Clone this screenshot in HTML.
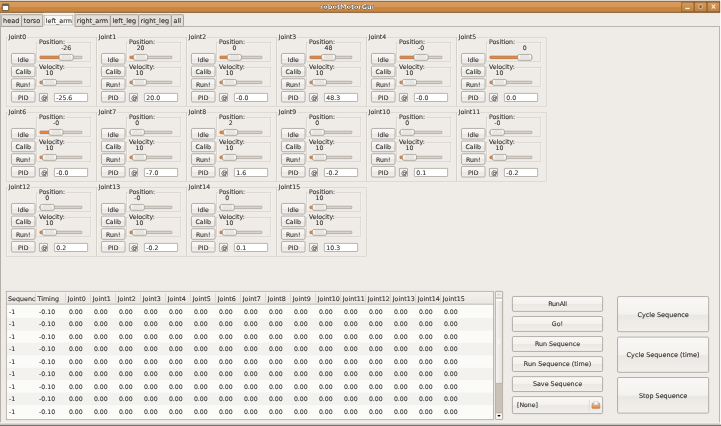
<!DOCTYPE html>
<html lang="en"><head><meta charset="utf-8"><title>robotMotorGui</title>
<style>html,body{margin:0;padding:0;background:#efebe7;overflow:hidden}body{width:721px;height:426px}svg{display:block;position:absolute;left:0;top:0;will-change:transform}text{font-family:'DejaVu Sans','Liberation Sans',sans-serif;white-space:pre;stroke:#2b2b2b;stroke-width:0.08px}</style></head><body>
<svg width="721" height="426" viewBox="0 0 721 426">
<defs>
<linearGradient id="btn" x1="0" y1="0" x2="0" y2="1"><stop offset="0" stop-color="#f9f8f6"/><stop offset="0.49" stop-color="#f4f2ef"/><stop offset="0.53" stop-color="#ebe8e4"/><stop offset="1" stop-color="#f1efec"/></linearGradient>
<linearGradient id="hnd" x1="0" y1="0" x2="0" y2="1"><stop offset="0" stop-color="#ffffff"/><stop offset="1" stop-color="#ebe8e3"/></linearGradient>
<linearGradient id="ttl" x1="0" y1="0" x2="0" y2="1"><stop offset="0" stop-color="#d89d60"/><stop offset="0.50" stop-color="#d59757"/><stop offset="0.58" stop-color="#c9853f"/><stop offset="1" stop-color="#ca8742"/></linearGradient>
<linearGradient id="wb" x1="0" y1="0" x2="0" y2="1"><stop offset="0" stop-color="#d19b5f"/><stop offset="1" stop-color="#c08141"/></linearGradient>
<linearGradient id="hdr" x1="0" y1="0" x2="0" y2="1"><stop offset="0" stop-color="#f4f2ef"/><stop offset="1" stop-color="#e9e6e1"/></linearGradient>
<linearGradient id="thumb" x1="0" y1="0" x2="1" y2="0"><stop offset="0" stop-color="#f6f4f2"/><stop offset="1" stop-color="#e4e0da"/></linearGradient>
<linearGradient id="bot" x1="0" y1="0" x2="0" y2="1"><stop offset="0" stop-color="#d9d6d2"/><stop offset="0.45" stop-color="#8f8c88"/><stop offset="1" stop-color="#5a5856"/></linearGradient>
<linearGradient id="fold" x1="0" y1="0" x2="0" y2="1"><stop offset="0" stop-color="#f3b57c"/><stop offset="1" stop-color="#e27a32"/></linearGradient>
</defs>
<rect x="0.00" y="0.00" width="721.00" height="426.00" fill="#efebe7"/>
<rect x="720.10" y="0.00" width="0.90" height="426.00" fill="#fbfaf9"/>
<rect x="0.00" y="0.00" width="720.10" height="1.20" fill="#ddd1c7"/>
<rect x="0.00" y="1.00" width="720.10" height="11.40" fill="url(#ttl)"/>
<rect x="0.00" y="1.10" width="720.10" height="0.80" fill="#86633a"/>
<rect x="0.00" y="11.70" width="720.10" height="1.25" fill="#8a663c"/>
<rect x="0.00" y="12.95" width="720.10" height="0.85" fill="#f8e4cc"/>
<rect x="2.30" y="4.20" width="6.40" height="6.40" fill="#fafafa" stroke="#5b3b1c" stroke-width="0.8" rx="0.4"/>
<rect x="2.50" y="4.30" width="6.00" height="1.50" fill="#4c4a48"/>
<text x="347.00" y="9.20" font-size="6.5" fill="#ffffff" text-anchor="middle" font-weight="bold" stroke="none" style="filter:drop-shadow(0.55px 0.55px 0 #3d2208) drop-shadow(0.15px 0.15px 0.2px rgba(61,34,8,0.6))">robotMotorGui</text>
<rect x="681.30" y="1.90" width="38.80" height="10.00" fill="#955d24"/>
<rect x="682.20" y="2.80" width="11.10" height="8.10" fill="url(#wb)" stroke="#c9985f" stroke-width="0.4" rx="0.6"/>
<rect x="695.00" y="2.80" width="11.10" height="8.10" fill="url(#wb)" stroke="#c9985f" stroke-width="0.4" rx="0.6"/>
<rect x="707.90" y="2.80" width="11.10" height="8.10" fill="url(#wb)" stroke="#c9985f" stroke-width="0.4" rx="0.6"/>
<rect x="685.40" y="7.80" width="4.30" height="1.30" fill="#fdf1d2"/>
<rect x="698.90" y="4.80" width="3.30" height="3.90" fill="#b47a3e" stroke="#e8d3b3" stroke-width="0.55"/>
<rect x="700.10" y="6.00" width="1.00" height="1.50" fill="#6e441b"/>
<path d="M711.7 4.5 L715.3 8.7 M715.3 4.5 L711.7 8.7" stroke="#f8ead6" stroke-width="1.15" fill="none"/>
<rect x="0.60" y="26.40" width="718.95" height="397.20" fill="#efebe7" stroke="#a59f96" stroke-width="0.7"/>
<rect x="1.20" y="14.70" width="20.40" height="11.70" fill="#e2ded8" stroke="#99938a" stroke-width="0.8" rx="0.8"/>
<text x="11.20" y="22.85" font-size="6.5" fill="#2b2b2b" text-anchor="middle">head</text>
<rect x="21.60" y="14.70" width="21.00" height="11.70" fill="#e2ded8" stroke="#99938a" stroke-width="0.8" rx="0.8"/>
<text x="31.90" y="22.85" font-size="6.5" fill="#2b2b2b" text-anchor="middle">torso</text>
<rect x="75.00" y="14.70" width="35.40" height="11.70" fill="#e2ded8" stroke="#99938a" stroke-width="0.8" rx="0.8"/>
<text x="92.50" y="22.85" font-size="6.5" fill="#2b2b2b" text-anchor="middle">right_arm</text>
<rect x="110.40" y="14.70" width="28.20" height="11.70" fill="#e2ded8" stroke="#99938a" stroke-width="0.8" rx="0.8"/>
<text x="124.30" y="22.85" font-size="6.5" fill="#2b2b2b" text-anchor="middle">left_leg</text>
<rect x="138.60" y="14.70" width="32.80" height="11.70" fill="#e2ded8" stroke="#99938a" stroke-width="0.8" rx="0.8"/>
<text x="154.80" y="22.85" font-size="6.5" fill="#2b2b2b" text-anchor="middle">right_leg</text>
<rect x="171.40" y="14.70" width="12.10" height="11.70" fill="#e2ded8" stroke="#99938a" stroke-width="0.8" rx="0.8"/>
<text x="177.25" y="22.85" font-size="6.5" fill="#2b2b2b" text-anchor="middle">all</text>
<rect x="43.00" y="12.95" width="31.30" height="14.15" fill="#f3f0ed"/>
<path d="M43.0 26.4 L43.0 13.8 Q43.0 13.2 43.6 13.2 L73.7 13.2 Q74.3 13.2 74.3 13.8 L74.3 26.4" fill="none" stroke="#b5afa6" stroke-width="0.6"/>
<rect x="43.30" y="12.95" width="30.70" height="0.85" fill="#fdfcfb"/>
<rect x="44.60" y="15.30" width="28.20" height="9.70" fill="#f9f8f7" stroke="#b3aea7" stroke-width="0.55"/>
<text x="58.80" y="22.85" font-size="6.4" fill="#2b2b2b" text-anchor="middle">left_arm</text>
<g transform="translate(0,0)">
<rect x="7.05" y="37.85" width="89.80" height="69.00" fill="none" stroke="#ffffff" stroke-width="0.5"/>
<rect x="6.60" y="37.40" width="89.80" height="69.00" fill="none" stroke="#cdc8c1" stroke-width="0.6"/>
<rect x="7.60" y="36.20" width="19.40" height="2.60" fill="#efebe7"/>
<text x="8.60" y="39.30" font-size="6.2" fill="#2b2b2b" text-anchor="start">Joint0</text>
<rect x="37.15" y="42.95" width="54.10" height="18.90" fill="none" stroke="#ffffff" stroke-width="0.5"/>
<rect x="36.70" y="42.50" width="54.10" height="18.90" fill="none" stroke="#cdc8c1" stroke-width="0.6"/>
<rect x="37.90" y="41.30" width="28.20" height="2.60" fill="#efebe7"/>
<text x="38.90" y="43.80" font-size="6.2" fill="#2b2b2b" text-anchor="start">Position:</text>
<rect x="37.15" y="67.95" width="54.10" height="18.90" fill="none" stroke="#ffffff" stroke-width="0.5"/>
<rect x="36.70" y="67.50" width="54.10" height="18.90" fill="none" stroke="#cdc8c1" stroke-width="0.6"/>
<rect x="37.90" y="66.30" width="27.30" height="2.60" fill="#efebe7"/>
<text x="38.90" y="68.80" font-size="6.2" fill="#2b2b2b" text-anchor="start">Velocity:</text>
<rect x="11.45" y="53.45" width="23.60" height="10.60" fill="url(#btn)" stroke="#7f7971" stroke-width="0.55" rx="1.4"/>
<text x="23.25" y="61.70" font-size="6.2" fill="#2b2b2b" text-anchor="middle">Idle</text>
<rect x="11.45" y="66.10" width="23.60" height="10.60" fill="url(#btn)" stroke="#7f7971" stroke-width="0.55" rx="1.4"/>
<text x="23.25" y="74.35" font-size="6.2" fill="#2b2b2b" text-anchor="middle">Calib</text>
<rect x="11.45" y="78.75" width="23.60" height="10.60" fill="url(#btn)" stroke="#7f7971" stroke-width="0.55" rx="1.4"/>
<text x="23.25" y="87.00" font-size="6.2" fill="#2b2b2b" text-anchor="middle">Run!</text>
<rect x="11.45" y="91.40" width="23.60" height="10.60" fill="url(#btn)" stroke="#7f7971" stroke-width="0.55" rx="1.4"/>
<text x="23.25" y="99.65" font-size="6.2" fill="#2b2b2b" text-anchor="middle">PID</text>
<text x="66.20" y="49.60" font-size="6.2" fill="#2b2b2b" text-anchor="middle">-26</text>
<rect x="40.00" y="56.23" width="41.90" height="2.35" fill="#d9d3cb" stroke="#958f86" stroke-width="0.55" rx="0.6"/>
<rect x="40.00" y="56.23" width="26.20" height="2.35" fill="#ec8640" stroke="#b7662c" stroke-width="0.55" rx="0.6"/>
<rect x="59.15" y="54.45" width="14.10" height="5.90" fill="url(#hnd)" stroke="#857f77" stroke-width="0.6" rx="1.7"/>
<rect x="61.60" y="55.30" width="9.20" height="4.20" fill="#e0ddd8"/>
<line x1="62.30" y1="58.90" x2="63.30" y2="55.90" stroke="#f8f7f5" stroke-width="0.6"/>
<line x1="64.00" y1="58.90" x2="65.00" y2="55.90" stroke="#f8f7f5" stroke-width="0.6"/>
<line x1="65.70" y1="58.90" x2="66.70" y2="55.90" stroke="#f8f7f5" stroke-width="0.6"/>
<line x1="67.40" y1="58.90" x2="68.40" y2="55.90" stroke="#f8f7f5" stroke-width="0.6"/>
<line x1="69.10" y1="58.90" x2="70.10" y2="55.90" stroke="#f8f7f5" stroke-width="0.6"/>
<text x="49.50" y="74.60" font-size="6.2" fill="#2b2b2b" text-anchor="middle">10</text>
<rect x="40.00" y="81.23" width="41.90" height="2.35" fill="#d9d3cb" stroke="#958f86" stroke-width="0.55" rx="0.6"/>
<rect x="40.00" y="81.23" width="9.45" height="2.35" fill="#ec8640" stroke="#b7662c" stroke-width="0.55" rx="0.6"/>
<rect x="42.40" y="79.45" width="14.10" height="5.90" fill="url(#hnd)" stroke="#857f77" stroke-width="0.6" rx="1.7"/>
<rect x="44.85" y="80.30" width="9.20" height="4.20" fill="#e0ddd8"/>
<line x1="45.55" y1="83.90" x2="46.55" y2="80.90" stroke="#f8f7f5" stroke-width="0.6"/>
<line x1="47.25" y1="83.90" x2="48.25" y2="80.90" stroke="#f8f7f5" stroke-width="0.6"/>
<line x1="48.95" y1="83.90" x2="49.95" y2="80.90" stroke="#f8f7f5" stroke-width="0.6"/>
<line x1="50.65" y1="83.90" x2="51.65" y2="80.90" stroke="#f8f7f5" stroke-width="0.6"/>
<line x1="52.35" y1="83.90" x2="53.35" y2="80.90" stroke="#f8f7f5" stroke-width="0.6"/>
<rect x="39.40" y="93.40" width="8.10" height="8.00" fill="#f6f4f2" stroke="#857f77" stroke-width="0.6" rx="0.5"/>
<svg x="39.7" y="93.7" width="7.6" height="7.4" viewBox="39.7 93.7 7.6 7.4">
<text x="41.20" y="99.50" font-size="6.2" fill="#2b2b2b" text-anchor="start">@</text>
</svg>
<rect x="54.40" y="93.40" width="33.20" height="8.10" fill="#ffffff" stroke="#8f8a82" stroke-width="0.6" rx="0.6"/>
<text x="56.30" y="99.60" font-size="6.2" fill="#2b2b2b" text-anchor="start">-25.6</text>
</g>
<g transform="translate(90,0)">
<rect x="7.05" y="37.85" width="89.80" height="69.00" fill="none" stroke="#ffffff" stroke-width="0.5"/>
<rect x="6.60" y="37.40" width="89.80" height="69.00" fill="none" stroke="#cdc8c1" stroke-width="0.6"/>
<rect x="7.60" y="36.20" width="19.40" height="2.60" fill="#efebe7"/>
<text x="8.60" y="39.30" font-size="6.2" fill="#2b2b2b" text-anchor="start">Joint1</text>
<rect x="37.15" y="42.95" width="54.10" height="18.90" fill="none" stroke="#ffffff" stroke-width="0.5"/>
<rect x="36.70" y="42.50" width="54.10" height="18.90" fill="none" stroke="#cdc8c1" stroke-width="0.6"/>
<rect x="37.90" y="41.30" width="28.20" height="2.60" fill="#efebe7"/>
<text x="38.90" y="43.80" font-size="6.2" fill="#2b2b2b" text-anchor="start">Position:</text>
<rect x="37.15" y="67.95" width="54.10" height="18.90" fill="none" stroke="#ffffff" stroke-width="0.5"/>
<rect x="36.70" y="67.50" width="54.10" height="18.90" fill="none" stroke="#cdc8c1" stroke-width="0.6"/>
<rect x="37.90" y="66.30" width="27.30" height="2.60" fill="#efebe7"/>
<text x="38.90" y="68.80" font-size="6.2" fill="#2b2b2b" text-anchor="start">Velocity:</text>
<rect x="11.45" y="53.45" width="23.60" height="10.60" fill="url(#btn)" stroke="#7f7971" stroke-width="0.55" rx="1.4"/>
<text x="23.25" y="61.70" font-size="6.2" fill="#2b2b2b" text-anchor="middle">Idle</text>
<rect x="11.45" y="66.10" width="23.60" height="10.60" fill="url(#btn)" stroke="#7f7971" stroke-width="0.55" rx="1.4"/>
<text x="23.25" y="74.35" font-size="6.2" fill="#2b2b2b" text-anchor="middle">Calib</text>
<rect x="11.45" y="78.75" width="23.60" height="10.60" fill="url(#btn)" stroke="#7f7971" stroke-width="0.55" rx="1.4"/>
<text x="23.25" y="87.00" font-size="6.2" fill="#2b2b2b" text-anchor="middle">Run!</text>
<rect x="11.45" y="91.40" width="23.60" height="10.60" fill="url(#btn)" stroke="#7f7971" stroke-width="0.55" rx="1.4"/>
<text x="23.25" y="99.65" font-size="6.2" fill="#2b2b2b" text-anchor="middle">PID</text>
<text x="50.60" y="49.60" font-size="6.2" fill="#2b2b2b" text-anchor="middle">20</text>
<rect x="40.00" y="56.23" width="41.90" height="2.35" fill="#d9d3cb" stroke="#958f86" stroke-width="0.55" rx="0.6"/>
<rect x="40.00" y="56.23" width="10.60" height="2.35" fill="#ec8640" stroke="#b7662c" stroke-width="0.55" rx="0.6"/>
<rect x="43.55" y="54.45" width="14.10" height="5.90" fill="url(#hnd)" stroke="#857f77" stroke-width="0.6" rx="1.7"/>
<rect x="46.00" y="55.30" width="9.20" height="4.20" fill="#e0ddd8"/>
<line x1="46.70" y1="58.90" x2="47.70" y2="55.90" stroke="#f8f7f5" stroke-width="0.6"/>
<line x1="48.40" y1="58.90" x2="49.40" y2="55.90" stroke="#f8f7f5" stroke-width="0.6"/>
<line x1="50.10" y1="58.90" x2="51.10" y2="55.90" stroke="#f8f7f5" stroke-width="0.6"/>
<line x1="51.80" y1="58.90" x2="52.80" y2="55.90" stroke="#f8f7f5" stroke-width="0.6"/>
<line x1="53.50" y1="58.90" x2="54.50" y2="55.90" stroke="#f8f7f5" stroke-width="0.6"/>
<text x="49.50" y="74.60" font-size="6.2" fill="#2b2b2b" text-anchor="middle">10</text>
<rect x="40.00" y="81.23" width="41.90" height="2.35" fill="#d9d3cb" stroke="#958f86" stroke-width="0.55" rx="0.6"/>
<rect x="40.00" y="81.23" width="9.45" height="2.35" fill="#ec8640" stroke="#b7662c" stroke-width="0.55" rx="0.6"/>
<rect x="42.40" y="79.45" width="14.10" height="5.90" fill="url(#hnd)" stroke="#857f77" stroke-width="0.6" rx="1.7"/>
<rect x="44.85" y="80.30" width="9.20" height="4.20" fill="#e0ddd8"/>
<line x1="45.55" y1="83.90" x2="46.55" y2="80.90" stroke="#f8f7f5" stroke-width="0.6"/>
<line x1="47.25" y1="83.90" x2="48.25" y2="80.90" stroke="#f8f7f5" stroke-width="0.6"/>
<line x1="48.95" y1="83.90" x2="49.95" y2="80.90" stroke="#f8f7f5" stroke-width="0.6"/>
<line x1="50.65" y1="83.90" x2="51.65" y2="80.90" stroke="#f8f7f5" stroke-width="0.6"/>
<line x1="52.35" y1="83.90" x2="53.35" y2="80.90" stroke="#f8f7f5" stroke-width="0.6"/>
<rect x="39.40" y="93.40" width="8.10" height="8.00" fill="#f6f4f2" stroke="#857f77" stroke-width="0.6" rx="0.5"/>
<svg x="39.7" y="93.7" width="7.6" height="7.4" viewBox="39.7 93.7 7.6 7.4">
<text x="41.20" y="99.50" font-size="6.2" fill="#2b2b2b" text-anchor="start">@</text>
</svg>
<rect x="54.40" y="93.40" width="33.20" height="8.10" fill="#ffffff" stroke="#8f8a82" stroke-width="0.6" rx="0.6"/>
<text x="56.30" y="99.60" font-size="6.2" fill="#2b2b2b" text-anchor="start">20.0</text>
</g>
<g transform="translate(180,0)">
<rect x="7.05" y="37.85" width="89.80" height="69.00" fill="none" stroke="#ffffff" stroke-width="0.5"/>
<rect x="6.60" y="37.40" width="89.80" height="69.00" fill="none" stroke="#cdc8c1" stroke-width="0.6"/>
<rect x="7.60" y="36.20" width="19.40" height="2.60" fill="#efebe7"/>
<text x="8.60" y="39.30" font-size="6.2" fill="#2b2b2b" text-anchor="start">Joint2</text>
<rect x="37.15" y="42.95" width="54.10" height="18.90" fill="none" stroke="#ffffff" stroke-width="0.5"/>
<rect x="36.70" y="42.50" width="54.10" height="18.90" fill="none" stroke="#cdc8c1" stroke-width="0.6"/>
<rect x="37.90" y="41.30" width="28.20" height="2.60" fill="#efebe7"/>
<text x="38.90" y="43.80" font-size="6.2" fill="#2b2b2b" text-anchor="start">Position:</text>
<rect x="37.15" y="67.95" width="54.10" height="18.90" fill="none" stroke="#ffffff" stroke-width="0.5"/>
<rect x="36.70" y="67.50" width="54.10" height="18.90" fill="none" stroke="#cdc8c1" stroke-width="0.6"/>
<rect x="37.90" y="66.30" width="27.30" height="2.60" fill="#efebe7"/>
<text x="38.90" y="68.80" font-size="6.2" fill="#2b2b2b" text-anchor="start">Velocity:</text>
<rect x="11.45" y="53.45" width="23.60" height="10.60" fill="url(#btn)" stroke="#7f7971" stroke-width="0.55" rx="1.4"/>
<text x="23.25" y="61.70" font-size="6.2" fill="#2b2b2b" text-anchor="middle">Idle</text>
<rect x="11.45" y="66.10" width="23.60" height="10.60" fill="url(#btn)" stroke="#7f7971" stroke-width="0.55" rx="1.4"/>
<text x="23.25" y="74.35" font-size="6.2" fill="#2b2b2b" text-anchor="middle">Calib</text>
<rect x="11.45" y="78.75" width="23.60" height="10.60" fill="url(#btn)" stroke="#7f7971" stroke-width="0.55" rx="1.4"/>
<text x="23.25" y="87.00" font-size="6.2" fill="#2b2b2b" text-anchor="middle">Run!</text>
<rect x="11.45" y="91.40" width="23.60" height="10.60" fill="url(#btn)" stroke="#7f7971" stroke-width="0.55" rx="1.4"/>
<text x="23.25" y="99.65" font-size="6.2" fill="#2b2b2b" text-anchor="middle">PID</text>
<text x="54.40" y="49.60" font-size="6.2" fill="#2b2b2b" text-anchor="middle">0</text>
<rect x="40.00" y="56.23" width="41.90" height="2.35" fill="#d9d3cb" stroke="#958f86" stroke-width="0.55" rx="0.6"/>
<rect x="40.00" y="56.23" width="14.40" height="2.35" fill="#ec8640" stroke="#b7662c" stroke-width="0.55" rx="0.6"/>
<rect x="47.35" y="54.45" width="14.10" height="5.90" fill="url(#hnd)" stroke="#857f77" stroke-width="0.6" rx="1.7"/>
<rect x="49.80" y="55.30" width="9.20" height="4.20" fill="#e0ddd8"/>
<line x1="50.50" y1="58.90" x2="51.50" y2="55.90" stroke="#f8f7f5" stroke-width="0.6"/>
<line x1="52.20" y1="58.90" x2="53.20" y2="55.90" stroke="#f8f7f5" stroke-width="0.6"/>
<line x1="53.90" y1="58.90" x2="54.90" y2="55.90" stroke="#f8f7f5" stroke-width="0.6"/>
<line x1="55.60" y1="58.90" x2="56.60" y2="55.90" stroke="#f8f7f5" stroke-width="0.6"/>
<line x1="57.30" y1="58.90" x2="58.30" y2="55.90" stroke="#f8f7f5" stroke-width="0.6"/>
<text x="49.50" y="74.60" font-size="6.2" fill="#2b2b2b" text-anchor="middle">10</text>
<rect x="40.00" y="81.23" width="41.90" height="2.35" fill="#d9d3cb" stroke="#958f86" stroke-width="0.55" rx="0.6"/>
<rect x="40.00" y="81.23" width="9.45" height="2.35" fill="#ec8640" stroke="#b7662c" stroke-width="0.55" rx="0.6"/>
<rect x="42.40" y="79.45" width="14.10" height="5.90" fill="url(#hnd)" stroke="#857f77" stroke-width="0.6" rx="1.7"/>
<rect x="44.85" y="80.30" width="9.20" height="4.20" fill="#e0ddd8"/>
<line x1="45.55" y1="83.90" x2="46.55" y2="80.90" stroke="#f8f7f5" stroke-width="0.6"/>
<line x1="47.25" y1="83.90" x2="48.25" y2="80.90" stroke="#f8f7f5" stroke-width="0.6"/>
<line x1="48.95" y1="83.90" x2="49.95" y2="80.90" stroke="#f8f7f5" stroke-width="0.6"/>
<line x1="50.65" y1="83.90" x2="51.65" y2="80.90" stroke="#f8f7f5" stroke-width="0.6"/>
<line x1="52.35" y1="83.90" x2="53.35" y2="80.90" stroke="#f8f7f5" stroke-width="0.6"/>
<rect x="39.40" y="93.40" width="8.10" height="8.00" fill="#f6f4f2" stroke="#857f77" stroke-width="0.6" rx="0.5"/>
<svg x="39.7" y="93.7" width="7.6" height="7.4" viewBox="39.7 93.7 7.6 7.4">
<text x="41.20" y="99.50" font-size="6.2" fill="#2b2b2b" text-anchor="start">@</text>
</svg>
<rect x="54.40" y="93.40" width="33.20" height="8.10" fill="#ffffff" stroke="#8f8a82" stroke-width="0.6" rx="0.6"/>
<text x="56.30" y="99.60" font-size="6.2" fill="#2b2b2b" text-anchor="start">-0.0</text>
</g>
<g transform="translate(270,0)">
<rect x="7.05" y="37.85" width="89.80" height="69.00" fill="none" stroke="#ffffff" stroke-width="0.5"/>
<rect x="6.60" y="37.40" width="89.80" height="69.00" fill="none" stroke="#cdc8c1" stroke-width="0.6"/>
<rect x="7.60" y="36.20" width="19.40" height="2.60" fill="#efebe7"/>
<text x="8.60" y="39.30" font-size="6.2" fill="#2b2b2b" text-anchor="start">Joint3</text>
<rect x="37.15" y="42.95" width="54.10" height="18.90" fill="none" stroke="#ffffff" stroke-width="0.5"/>
<rect x="36.70" y="42.50" width="54.10" height="18.90" fill="none" stroke="#cdc8c1" stroke-width="0.6"/>
<rect x="37.90" y="41.30" width="28.20" height="2.60" fill="#efebe7"/>
<text x="38.90" y="43.80" font-size="6.2" fill="#2b2b2b" text-anchor="start">Position:</text>
<rect x="37.15" y="67.95" width="54.10" height="18.90" fill="none" stroke="#ffffff" stroke-width="0.5"/>
<rect x="36.70" y="67.50" width="54.10" height="18.90" fill="none" stroke="#cdc8c1" stroke-width="0.6"/>
<rect x="37.90" y="66.30" width="27.30" height="2.60" fill="#efebe7"/>
<text x="38.90" y="68.80" font-size="6.2" fill="#2b2b2b" text-anchor="start">Velocity:</text>
<rect x="11.45" y="53.45" width="23.60" height="10.60" fill="url(#btn)" stroke="#7f7971" stroke-width="0.55" rx="1.4"/>
<text x="23.25" y="61.70" font-size="6.2" fill="#2b2b2b" text-anchor="middle">Idle</text>
<rect x="11.45" y="66.10" width="23.60" height="10.60" fill="url(#btn)" stroke="#7f7971" stroke-width="0.55" rx="1.4"/>
<text x="23.25" y="74.35" font-size="6.2" fill="#2b2b2b" text-anchor="middle">Calib</text>
<rect x="11.45" y="78.75" width="23.60" height="10.60" fill="url(#btn)" stroke="#7f7971" stroke-width="0.55" rx="1.4"/>
<text x="23.25" y="87.00" font-size="6.2" fill="#2b2b2b" text-anchor="middle">Run!</text>
<rect x="11.45" y="91.40" width="23.60" height="10.60" fill="url(#btn)" stroke="#7f7971" stroke-width="0.55" rx="1.4"/>
<text x="23.25" y="99.65" font-size="6.2" fill="#2b2b2b" text-anchor="middle">PID</text>
<text x="58.50" y="49.60" font-size="6.2" fill="#2b2b2b" text-anchor="middle">48</text>
<rect x="40.00" y="56.23" width="41.90" height="2.35" fill="#d9d3cb" stroke="#958f86" stroke-width="0.55" rx="0.6"/>
<rect x="40.00" y="56.23" width="18.50" height="2.35" fill="#ec8640" stroke="#b7662c" stroke-width="0.55" rx="0.6"/>
<rect x="51.45" y="54.45" width="14.10" height="5.90" fill="url(#hnd)" stroke="#857f77" stroke-width="0.6" rx="1.7"/>
<rect x="53.90" y="55.30" width="9.20" height="4.20" fill="#e0ddd8"/>
<line x1="54.60" y1="58.90" x2="55.60" y2="55.90" stroke="#f8f7f5" stroke-width="0.6"/>
<line x1="56.30" y1="58.90" x2="57.30" y2="55.90" stroke="#f8f7f5" stroke-width="0.6"/>
<line x1="58.00" y1="58.90" x2="59.00" y2="55.90" stroke="#f8f7f5" stroke-width="0.6"/>
<line x1="59.70" y1="58.90" x2="60.70" y2="55.90" stroke="#f8f7f5" stroke-width="0.6"/>
<line x1="61.40" y1="58.90" x2="62.40" y2="55.90" stroke="#f8f7f5" stroke-width="0.6"/>
<text x="49.50" y="74.60" font-size="6.2" fill="#2b2b2b" text-anchor="middle">10</text>
<rect x="40.00" y="81.23" width="41.90" height="2.35" fill="#d9d3cb" stroke="#958f86" stroke-width="0.55" rx="0.6"/>
<rect x="40.00" y="81.23" width="9.45" height="2.35" fill="#ec8640" stroke="#b7662c" stroke-width="0.55" rx="0.6"/>
<rect x="42.40" y="79.45" width="14.10" height="5.90" fill="url(#hnd)" stroke="#857f77" stroke-width="0.6" rx="1.7"/>
<rect x="44.85" y="80.30" width="9.20" height="4.20" fill="#e0ddd8"/>
<line x1="45.55" y1="83.90" x2="46.55" y2="80.90" stroke="#f8f7f5" stroke-width="0.6"/>
<line x1="47.25" y1="83.90" x2="48.25" y2="80.90" stroke="#f8f7f5" stroke-width="0.6"/>
<line x1="48.95" y1="83.90" x2="49.95" y2="80.90" stroke="#f8f7f5" stroke-width="0.6"/>
<line x1="50.65" y1="83.90" x2="51.65" y2="80.90" stroke="#f8f7f5" stroke-width="0.6"/>
<line x1="52.35" y1="83.90" x2="53.35" y2="80.90" stroke="#f8f7f5" stroke-width="0.6"/>
<rect x="39.40" y="93.40" width="8.10" height="8.00" fill="#f6f4f2" stroke="#857f77" stroke-width="0.6" rx="0.5"/>
<svg x="39.7" y="93.7" width="7.6" height="7.4" viewBox="39.7 93.7 7.6 7.4">
<text x="41.20" y="99.50" font-size="6.2" fill="#2b2b2b" text-anchor="start">@</text>
</svg>
<rect x="54.40" y="93.40" width="33.20" height="8.10" fill="#ffffff" stroke="#8f8a82" stroke-width="0.6" rx="0.6"/>
<text x="56.30" y="99.60" font-size="6.2" fill="#2b2b2b" text-anchor="start">48.3</text>
</g>
<g transform="translate(360,0)">
<rect x="7.05" y="37.85" width="89.80" height="69.00" fill="none" stroke="#ffffff" stroke-width="0.5"/>
<rect x="6.60" y="37.40" width="89.80" height="69.00" fill="none" stroke="#cdc8c1" stroke-width="0.6"/>
<rect x="7.60" y="36.20" width="19.40" height="2.60" fill="#efebe7"/>
<text x="8.60" y="39.30" font-size="6.2" fill="#2b2b2b" text-anchor="start">Joint4</text>
<rect x="37.15" y="42.95" width="54.10" height="18.90" fill="none" stroke="#ffffff" stroke-width="0.5"/>
<rect x="36.70" y="42.50" width="54.10" height="18.90" fill="none" stroke="#cdc8c1" stroke-width="0.6"/>
<rect x="37.90" y="41.30" width="28.20" height="2.60" fill="#efebe7"/>
<text x="38.90" y="43.80" font-size="6.2" fill="#2b2b2b" text-anchor="start">Position:</text>
<rect x="37.15" y="67.95" width="54.10" height="18.90" fill="none" stroke="#ffffff" stroke-width="0.5"/>
<rect x="36.70" y="67.50" width="54.10" height="18.90" fill="none" stroke="#cdc8c1" stroke-width="0.6"/>
<rect x="37.90" y="66.30" width="27.30" height="2.60" fill="#efebe7"/>
<text x="38.90" y="68.80" font-size="6.2" fill="#2b2b2b" text-anchor="start">Velocity:</text>
<rect x="11.45" y="53.45" width="23.60" height="10.60" fill="url(#btn)" stroke="#7f7971" stroke-width="0.55" rx="1.4"/>
<text x="23.25" y="61.70" font-size="6.2" fill="#2b2b2b" text-anchor="middle">Idle</text>
<rect x="11.45" y="66.10" width="23.60" height="10.60" fill="url(#btn)" stroke="#7f7971" stroke-width="0.55" rx="1.4"/>
<text x="23.25" y="74.35" font-size="6.2" fill="#2b2b2b" text-anchor="middle">Calib</text>
<rect x="11.45" y="78.75" width="23.60" height="10.60" fill="url(#btn)" stroke="#7f7971" stroke-width="0.55" rx="1.4"/>
<text x="23.25" y="87.00" font-size="6.2" fill="#2b2b2b" text-anchor="middle">Run!</text>
<rect x="11.45" y="91.40" width="23.60" height="10.60" fill="url(#btn)" stroke="#7f7971" stroke-width="0.55" rx="1.4"/>
<text x="23.25" y="99.65" font-size="6.2" fill="#2b2b2b" text-anchor="middle">PID</text>
<text x="61.00" y="49.60" font-size="6.2" fill="#2b2b2b" text-anchor="middle">-0</text>
<rect x="40.00" y="56.23" width="41.90" height="2.35" fill="#d9d3cb" stroke="#958f86" stroke-width="0.55" rx="0.6"/>
<rect x="40.00" y="56.23" width="21.00" height="2.35" fill="#ec8640" stroke="#b7662c" stroke-width="0.55" rx="0.6"/>
<rect x="53.95" y="54.45" width="14.10" height="5.90" fill="url(#hnd)" stroke="#857f77" stroke-width="0.6" rx="1.7"/>
<rect x="56.40" y="55.30" width="9.20" height="4.20" fill="#e0ddd8"/>
<line x1="57.10" y1="58.90" x2="58.10" y2="55.90" stroke="#f8f7f5" stroke-width="0.6"/>
<line x1="58.80" y1="58.90" x2="59.80" y2="55.90" stroke="#f8f7f5" stroke-width="0.6"/>
<line x1="60.50" y1="58.90" x2="61.50" y2="55.90" stroke="#f8f7f5" stroke-width="0.6"/>
<line x1="62.20" y1="58.90" x2="63.20" y2="55.90" stroke="#f8f7f5" stroke-width="0.6"/>
<line x1="63.90" y1="58.90" x2="64.90" y2="55.90" stroke="#f8f7f5" stroke-width="0.6"/>
<text x="49.50" y="74.60" font-size="6.2" fill="#2b2b2b" text-anchor="middle">10</text>
<rect x="40.00" y="81.23" width="41.90" height="2.35" fill="#d9d3cb" stroke="#958f86" stroke-width="0.55" rx="0.6"/>
<rect x="40.00" y="81.23" width="9.45" height="2.35" fill="#ec8640" stroke="#b7662c" stroke-width="0.55" rx="0.6"/>
<rect x="42.40" y="79.45" width="14.10" height="5.90" fill="url(#hnd)" stroke="#857f77" stroke-width="0.6" rx="1.7"/>
<rect x="44.85" y="80.30" width="9.20" height="4.20" fill="#e0ddd8"/>
<line x1="45.55" y1="83.90" x2="46.55" y2="80.90" stroke="#f8f7f5" stroke-width="0.6"/>
<line x1="47.25" y1="83.90" x2="48.25" y2="80.90" stroke="#f8f7f5" stroke-width="0.6"/>
<line x1="48.95" y1="83.90" x2="49.95" y2="80.90" stroke="#f8f7f5" stroke-width="0.6"/>
<line x1="50.65" y1="83.90" x2="51.65" y2="80.90" stroke="#f8f7f5" stroke-width="0.6"/>
<line x1="52.35" y1="83.90" x2="53.35" y2="80.90" stroke="#f8f7f5" stroke-width="0.6"/>
<rect x="39.40" y="93.40" width="8.10" height="8.00" fill="#f6f4f2" stroke="#857f77" stroke-width="0.6" rx="0.5"/>
<svg x="39.7" y="93.7" width="7.6" height="7.4" viewBox="39.7 93.7 7.6 7.4">
<text x="41.20" y="99.50" font-size="6.2" fill="#2b2b2b" text-anchor="start">@</text>
</svg>
<rect x="54.40" y="93.40" width="33.20" height="8.10" fill="#ffffff" stroke="#8f8a82" stroke-width="0.6" rx="0.6"/>
<text x="56.30" y="99.60" font-size="6.2" fill="#2b2b2b" text-anchor="start">-0.0</text>
</g>
<g transform="translate(450,0)">
<rect x="7.05" y="37.85" width="89.80" height="69.00" fill="none" stroke="#ffffff" stroke-width="0.5"/>
<rect x="6.60" y="37.40" width="89.80" height="69.00" fill="none" stroke="#cdc8c1" stroke-width="0.6"/>
<rect x="7.60" y="36.20" width="19.40" height="2.60" fill="#efebe7"/>
<text x="8.60" y="39.30" font-size="6.2" fill="#2b2b2b" text-anchor="start">Joint5</text>
<rect x="37.15" y="42.95" width="54.10" height="18.90" fill="none" stroke="#ffffff" stroke-width="0.5"/>
<rect x="36.70" y="42.50" width="54.10" height="18.90" fill="none" stroke="#cdc8c1" stroke-width="0.6"/>
<rect x="37.90" y="41.30" width="28.20" height="2.60" fill="#efebe7"/>
<text x="38.90" y="43.80" font-size="6.2" fill="#2b2b2b" text-anchor="start">Position:</text>
<rect x="37.15" y="67.95" width="54.10" height="18.90" fill="none" stroke="#ffffff" stroke-width="0.5"/>
<rect x="36.70" y="67.50" width="54.10" height="18.90" fill="none" stroke="#cdc8c1" stroke-width="0.6"/>
<rect x="37.90" y="66.30" width="27.30" height="2.60" fill="#efebe7"/>
<text x="38.90" y="68.80" font-size="6.2" fill="#2b2b2b" text-anchor="start">Velocity:</text>
<rect x="11.45" y="53.45" width="23.60" height="10.60" fill="url(#btn)" stroke="#7f7971" stroke-width="0.55" rx="1.4"/>
<text x="23.25" y="61.70" font-size="6.2" fill="#2b2b2b" text-anchor="middle">Idle</text>
<rect x="11.45" y="66.10" width="23.60" height="10.60" fill="url(#btn)" stroke="#7f7971" stroke-width="0.55" rx="1.4"/>
<text x="23.25" y="74.35" font-size="6.2" fill="#2b2b2b" text-anchor="middle">Calib</text>
<rect x="11.45" y="78.75" width="23.60" height="10.60" fill="url(#btn)" stroke="#7f7971" stroke-width="0.55" rx="1.4"/>
<text x="23.25" y="87.00" font-size="6.2" fill="#2b2b2b" text-anchor="middle">Run!</text>
<rect x="11.45" y="91.40" width="23.60" height="10.60" fill="url(#btn)" stroke="#7f7971" stroke-width="0.55" rx="1.4"/>
<text x="23.25" y="99.65" font-size="6.2" fill="#2b2b2b" text-anchor="middle">PID</text>
<text x="74.75" y="49.60" font-size="6.2" fill="#2b2b2b" text-anchor="middle">0</text>
<rect x="40.00" y="56.23" width="41.90" height="2.35" fill="#d9d3cb" stroke="#958f86" stroke-width="0.55" rx="0.6"/>
<rect x="40.00" y="56.23" width="34.75" height="2.35" fill="#ec8640" stroke="#b7662c" stroke-width="0.55" rx="0.6"/>
<rect x="67.70" y="54.45" width="14.10" height="5.90" fill="url(#hnd)" stroke="#857f77" stroke-width="0.6" rx="1.7"/>
<rect x="70.15" y="55.30" width="9.20" height="4.20" fill="#e0ddd8"/>
<line x1="70.85" y1="58.90" x2="71.85" y2="55.90" stroke="#f8f7f5" stroke-width="0.6"/>
<line x1="72.55" y1="58.90" x2="73.55" y2="55.90" stroke="#f8f7f5" stroke-width="0.6"/>
<line x1="74.25" y1="58.90" x2="75.25" y2="55.90" stroke="#f8f7f5" stroke-width="0.6"/>
<line x1="75.95" y1="58.90" x2="76.95" y2="55.90" stroke="#f8f7f5" stroke-width="0.6"/>
<line x1="77.65" y1="58.90" x2="78.65" y2="55.90" stroke="#f8f7f5" stroke-width="0.6"/>
<text x="49.50" y="74.60" font-size="6.2" fill="#2b2b2b" text-anchor="middle">10</text>
<rect x="40.00" y="81.23" width="41.90" height="2.35" fill="#d9d3cb" stroke="#958f86" stroke-width="0.55" rx="0.6"/>
<rect x="40.00" y="81.23" width="9.45" height="2.35" fill="#ec8640" stroke="#b7662c" stroke-width="0.55" rx="0.6"/>
<rect x="42.40" y="79.45" width="14.10" height="5.90" fill="url(#hnd)" stroke="#857f77" stroke-width="0.6" rx="1.7"/>
<rect x="44.85" y="80.30" width="9.20" height="4.20" fill="#e0ddd8"/>
<line x1="45.55" y1="83.90" x2="46.55" y2="80.90" stroke="#f8f7f5" stroke-width="0.6"/>
<line x1="47.25" y1="83.90" x2="48.25" y2="80.90" stroke="#f8f7f5" stroke-width="0.6"/>
<line x1="48.95" y1="83.90" x2="49.95" y2="80.90" stroke="#f8f7f5" stroke-width="0.6"/>
<line x1="50.65" y1="83.90" x2="51.65" y2="80.90" stroke="#f8f7f5" stroke-width="0.6"/>
<line x1="52.35" y1="83.90" x2="53.35" y2="80.90" stroke="#f8f7f5" stroke-width="0.6"/>
<rect x="39.40" y="93.40" width="8.10" height="8.00" fill="#f6f4f2" stroke="#857f77" stroke-width="0.6" rx="0.5"/>
<svg x="39.7" y="93.7" width="7.6" height="7.4" viewBox="39.7 93.7 7.6 7.4">
<text x="41.20" y="99.50" font-size="6.2" fill="#2b2b2b" text-anchor="start">@</text>
</svg>
<rect x="54.40" y="93.40" width="33.20" height="8.10" fill="#ffffff" stroke="#8f8a82" stroke-width="0.6" rx="0.6"/>
<text x="56.30" y="99.60" font-size="6.2" fill="#2b2b2b" text-anchor="start">0.0</text>
</g>
<g transform="translate(0,75)">
<rect x="7.05" y="37.85" width="89.80" height="69.00" fill="none" stroke="#ffffff" stroke-width="0.5"/>
<rect x="6.60" y="37.40" width="89.80" height="69.00" fill="none" stroke="#cdc8c1" stroke-width="0.6"/>
<rect x="7.60" y="36.20" width="19.40" height="2.60" fill="#efebe7"/>
<text x="8.60" y="39.30" font-size="6.2" fill="#2b2b2b" text-anchor="start">Joint6</text>
<rect x="37.15" y="42.95" width="54.10" height="18.90" fill="none" stroke="#ffffff" stroke-width="0.5"/>
<rect x="36.70" y="42.50" width="54.10" height="18.90" fill="none" stroke="#cdc8c1" stroke-width="0.6"/>
<rect x="37.90" y="41.30" width="28.20" height="2.60" fill="#efebe7"/>
<text x="38.90" y="43.80" font-size="6.2" fill="#2b2b2b" text-anchor="start">Position:</text>
<rect x="37.15" y="67.95" width="54.10" height="18.90" fill="none" stroke="#ffffff" stroke-width="0.5"/>
<rect x="36.70" y="67.50" width="54.10" height="18.90" fill="none" stroke="#cdc8c1" stroke-width="0.6"/>
<rect x="37.90" y="66.30" width="27.30" height="2.60" fill="#efebe7"/>
<text x="38.90" y="68.80" font-size="6.2" fill="#2b2b2b" text-anchor="start">Velocity:</text>
<rect x="11.45" y="53.45" width="23.60" height="10.60" fill="url(#btn)" stroke="#7f7971" stroke-width="0.55" rx="1.4"/>
<text x="23.25" y="61.70" font-size="6.2" fill="#2b2b2b" text-anchor="middle">Idle</text>
<rect x="11.45" y="66.10" width="23.60" height="10.60" fill="url(#btn)" stroke="#7f7971" stroke-width="0.55" rx="1.4"/>
<text x="23.25" y="74.35" font-size="6.2" fill="#2b2b2b" text-anchor="middle">Calib</text>
<rect x="11.45" y="78.75" width="23.60" height="10.60" fill="url(#btn)" stroke="#7f7971" stroke-width="0.55" rx="1.4"/>
<text x="23.25" y="87.00" font-size="6.2" fill="#2b2b2b" text-anchor="middle">Run!</text>
<rect x="11.45" y="91.40" width="23.60" height="10.60" fill="url(#btn)" stroke="#7f7971" stroke-width="0.55" rx="1.4"/>
<text x="23.25" y="99.65" font-size="6.2" fill="#2b2b2b" text-anchor="middle">PID</text>
<text x="56.00" y="49.60" font-size="6.2" fill="#2b2b2b" text-anchor="middle">-0</text>
<rect x="40.00" y="56.23" width="41.90" height="2.35" fill="#d9d3cb" stroke="#958f86" stroke-width="0.55" rx="0.6"/>
<rect x="40.00" y="56.23" width="16.00" height="2.35" fill="#ec8640" stroke="#b7662c" stroke-width="0.55" rx="0.6"/>
<rect x="48.95" y="54.45" width="14.10" height="5.90" fill="url(#hnd)" stroke="#857f77" stroke-width="0.6" rx="1.7"/>
<rect x="51.40" y="55.30" width="9.20" height="4.20" fill="#e0ddd8"/>
<line x1="52.10" y1="58.90" x2="53.10" y2="55.90" stroke="#f8f7f5" stroke-width="0.6"/>
<line x1="53.80" y1="58.90" x2="54.80" y2="55.90" stroke="#f8f7f5" stroke-width="0.6"/>
<line x1="55.50" y1="58.90" x2="56.50" y2="55.90" stroke="#f8f7f5" stroke-width="0.6"/>
<line x1="57.20" y1="58.90" x2="58.20" y2="55.90" stroke="#f8f7f5" stroke-width="0.6"/>
<line x1="58.90" y1="58.90" x2="59.90" y2="55.90" stroke="#f8f7f5" stroke-width="0.6"/>
<text x="49.50" y="74.60" font-size="6.2" fill="#2b2b2b" text-anchor="middle">10</text>
<rect x="40.00" y="81.23" width="41.90" height="2.35" fill="#d9d3cb" stroke="#958f86" stroke-width="0.55" rx="0.6"/>
<rect x="40.00" y="81.23" width="9.45" height="2.35" fill="#ec8640" stroke="#b7662c" stroke-width="0.55" rx="0.6"/>
<rect x="42.40" y="79.45" width="14.10" height="5.90" fill="url(#hnd)" stroke="#857f77" stroke-width="0.6" rx="1.7"/>
<rect x="44.85" y="80.30" width="9.20" height="4.20" fill="#e0ddd8"/>
<line x1="45.55" y1="83.90" x2="46.55" y2="80.90" stroke="#f8f7f5" stroke-width="0.6"/>
<line x1="47.25" y1="83.90" x2="48.25" y2="80.90" stroke="#f8f7f5" stroke-width="0.6"/>
<line x1="48.95" y1="83.90" x2="49.95" y2="80.90" stroke="#f8f7f5" stroke-width="0.6"/>
<line x1="50.65" y1="83.90" x2="51.65" y2="80.90" stroke="#f8f7f5" stroke-width="0.6"/>
<line x1="52.35" y1="83.90" x2="53.35" y2="80.90" stroke="#f8f7f5" stroke-width="0.6"/>
<rect x="39.40" y="93.40" width="8.10" height="8.00" fill="#f6f4f2" stroke="#857f77" stroke-width="0.6" rx="0.5"/>
<svg x="39.7" y="93.7" width="7.6" height="7.4" viewBox="39.7 93.7 7.6 7.4">
<text x="41.20" y="99.50" font-size="6.2" fill="#2b2b2b" text-anchor="start">@</text>
</svg>
<rect x="54.40" y="93.40" width="33.20" height="8.10" fill="#ffffff" stroke="#8f8a82" stroke-width="0.6" rx="0.6"/>
<text x="56.30" y="99.60" font-size="6.2" fill="#2b2b2b" text-anchor="start">-0.0</text>
</g>
<g transform="translate(90,75)">
<rect x="7.05" y="37.85" width="89.80" height="69.00" fill="none" stroke="#ffffff" stroke-width="0.5"/>
<rect x="6.60" y="37.40" width="89.80" height="69.00" fill="none" stroke="#cdc8c1" stroke-width="0.6"/>
<rect x="7.60" y="36.20" width="19.40" height="2.60" fill="#efebe7"/>
<text x="8.60" y="39.30" font-size="6.2" fill="#2b2b2b" text-anchor="start">Joint7</text>
<rect x="37.15" y="42.95" width="54.10" height="18.90" fill="none" stroke="#ffffff" stroke-width="0.5"/>
<rect x="36.70" y="42.50" width="54.10" height="18.90" fill="none" stroke="#cdc8c1" stroke-width="0.6"/>
<rect x="37.90" y="41.30" width="28.20" height="2.60" fill="#efebe7"/>
<text x="38.90" y="43.80" font-size="6.2" fill="#2b2b2b" text-anchor="start">Position:</text>
<rect x="37.15" y="67.95" width="54.10" height="18.90" fill="none" stroke="#ffffff" stroke-width="0.5"/>
<rect x="36.70" y="67.50" width="54.10" height="18.90" fill="none" stroke="#cdc8c1" stroke-width="0.6"/>
<rect x="37.90" y="66.30" width="27.30" height="2.60" fill="#efebe7"/>
<text x="38.90" y="68.80" font-size="6.2" fill="#2b2b2b" text-anchor="start">Velocity:</text>
<rect x="11.45" y="53.45" width="23.60" height="10.60" fill="url(#btn)" stroke="#7f7971" stroke-width="0.55" rx="1.4"/>
<text x="23.25" y="61.70" font-size="6.2" fill="#2b2b2b" text-anchor="middle">Idle</text>
<rect x="11.45" y="66.10" width="23.60" height="10.60" fill="url(#btn)" stroke="#7f7971" stroke-width="0.55" rx="1.4"/>
<text x="23.25" y="74.35" font-size="6.2" fill="#2b2b2b" text-anchor="middle">Calib</text>
<rect x="11.45" y="78.75" width="23.60" height="10.60" fill="url(#btn)" stroke="#7f7971" stroke-width="0.55" rx="1.4"/>
<text x="23.25" y="87.00" font-size="6.2" fill="#2b2b2b" text-anchor="middle">Run!</text>
<rect x="11.45" y="91.40" width="23.60" height="10.60" fill="url(#btn)" stroke="#7f7971" stroke-width="0.55" rx="1.4"/>
<text x="23.25" y="99.65" font-size="6.2" fill="#2b2b2b" text-anchor="middle">PID</text>
<text x="47.25" y="49.60" font-size="6.2" fill="#2b2b2b" text-anchor="middle">0</text>
<rect x="40.00" y="56.23" width="41.90" height="2.35" fill="#d9d3cb" stroke="#958f86" stroke-width="0.55" rx="0.6"/>
<rect x="40.00" y="56.23" width="1.75" height="2.35" fill="#ec8640" stroke="#b7662c" stroke-width="0.55" rx="0.6"/>
<rect x="40.20" y="54.45" width="14.10" height="5.90" fill="url(#hnd)" stroke="#857f77" stroke-width="0.6" rx="1.7"/>
<rect x="42.65" y="55.30" width="9.20" height="4.20" fill="#e0ddd8"/>
<line x1="43.35" y1="58.90" x2="44.35" y2="55.90" stroke="#f8f7f5" stroke-width="0.6"/>
<line x1="45.05" y1="58.90" x2="46.05" y2="55.90" stroke="#f8f7f5" stroke-width="0.6"/>
<line x1="46.75" y1="58.90" x2="47.75" y2="55.90" stroke="#f8f7f5" stroke-width="0.6"/>
<line x1="48.45" y1="58.90" x2="49.45" y2="55.90" stroke="#f8f7f5" stroke-width="0.6"/>
<line x1="50.15" y1="58.90" x2="51.15" y2="55.90" stroke="#f8f7f5" stroke-width="0.6"/>
<text x="49.50" y="74.60" font-size="6.2" fill="#2b2b2b" text-anchor="middle">10</text>
<rect x="40.00" y="81.23" width="41.90" height="2.35" fill="#d9d3cb" stroke="#958f86" stroke-width="0.55" rx="0.6"/>
<rect x="40.00" y="81.23" width="9.45" height="2.35" fill="#ec8640" stroke="#b7662c" stroke-width="0.55" rx="0.6"/>
<rect x="42.40" y="79.45" width="14.10" height="5.90" fill="url(#hnd)" stroke="#857f77" stroke-width="0.6" rx="1.7"/>
<rect x="44.85" y="80.30" width="9.20" height="4.20" fill="#e0ddd8"/>
<line x1="45.55" y1="83.90" x2="46.55" y2="80.90" stroke="#f8f7f5" stroke-width="0.6"/>
<line x1="47.25" y1="83.90" x2="48.25" y2="80.90" stroke="#f8f7f5" stroke-width="0.6"/>
<line x1="48.95" y1="83.90" x2="49.95" y2="80.90" stroke="#f8f7f5" stroke-width="0.6"/>
<line x1="50.65" y1="83.90" x2="51.65" y2="80.90" stroke="#f8f7f5" stroke-width="0.6"/>
<line x1="52.35" y1="83.90" x2="53.35" y2="80.90" stroke="#f8f7f5" stroke-width="0.6"/>
<rect x="39.40" y="93.40" width="8.10" height="8.00" fill="#f6f4f2" stroke="#857f77" stroke-width="0.6" rx="0.5"/>
<svg x="39.7" y="93.7" width="7.6" height="7.4" viewBox="39.7 93.7 7.6 7.4">
<text x="41.20" y="99.50" font-size="6.2" fill="#2b2b2b" text-anchor="start">@</text>
</svg>
<rect x="54.40" y="93.40" width="33.20" height="8.10" fill="#ffffff" stroke="#8f8a82" stroke-width="0.6" rx="0.6"/>
<text x="56.30" y="99.60" font-size="6.2" fill="#2b2b2b" text-anchor="start">-7.0</text>
</g>
<g transform="translate(180,75)">
<rect x="7.05" y="37.85" width="89.80" height="69.00" fill="none" stroke="#ffffff" stroke-width="0.5"/>
<rect x="6.60" y="37.40" width="89.80" height="69.00" fill="none" stroke="#cdc8c1" stroke-width="0.6"/>
<rect x="7.60" y="36.20" width="19.40" height="2.60" fill="#efebe7"/>
<text x="8.60" y="39.30" font-size="6.2" fill="#2b2b2b" text-anchor="start">Joint8</text>
<rect x="37.15" y="42.95" width="54.10" height="18.90" fill="none" stroke="#ffffff" stroke-width="0.5"/>
<rect x="36.70" y="42.50" width="54.10" height="18.90" fill="none" stroke="#cdc8c1" stroke-width="0.6"/>
<rect x="37.90" y="41.30" width="28.20" height="2.60" fill="#efebe7"/>
<text x="38.90" y="43.80" font-size="6.2" fill="#2b2b2b" text-anchor="start">Position:</text>
<rect x="37.15" y="67.95" width="54.10" height="18.90" fill="none" stroke="#ffffff" stroke-width="0.5"/>
<rect x="36.70" y="67.50" width="54.10" height="18.90" fill="none" stroke="#cdc8c1" stroke-width="0.6"/>
<rect x="37.90" y="66.30" width="27.30" height="2.60" fill="#efebe7"/>
<text x="38.90" y="68.80" font-size="6.2" fill="#2b2b2b" text-anchor="start">Velocity:</text>
<rect x="11.45" y="53.45" width="23.60" height="10.60" fill="url(#btn)" stroke="#7f7971" stroke-width="0.55" rx="1.4"/>
<text x="23.25" y="61.70" font-size="6.2" fill="#2b2b2b" text-anchor="middle">Idle</text>
<rect x="11.45" y="66.10" width="23.60" height="10.60" fill="url(#btn)" stroke="#7f7971" stroke-width="0.55" rx="1.4"/>
<text x="23.25" y="74.35" font-size="6.2" fill="#2b2b2b" text-anchor="middle">Calib</text>
<rect x="11.45" y="78.75" width="23.60" height="10.60" fill="url(#btn)" stroke="#7f7971" stroke-width="0.55" rx="1.4"/>
<text x="23.25" y="87.00" font-size="6.2" fill="#2b2b2b" text-anchor="middle">Run!</text>
<rect x="11.45" y="91.40" width="23.60" height="10.60" fill="url(#btn)" stroke="#7f7971" stroke-width="0.55" rx="1.4"/>
<text x="23.25" y="99.65" font-size="6.2" fill="#2b2b2b" text-anchor="middle">PID</text>
<text x="50.60" y="49.60" font-size="6.2" fill="#2b2b2b" text-anchor="middle">2</text>
<rect x="40.00" y="56.23" width="41.90" height="2.35" fill="#d9d3cb" stroke="#958f86" stroke-width="0.55" rx="0.6"/>
<rect x="40.00" y="56.23" width="10.60" height="2.35" fill="#ec8640" stroke="#b7662c" stroke-width="0.55" rx="0.6"/>
<rect x="43.55" y="54.45" width="14.10" height="5.90" fill="url(#hnd)" stroke="#857f77" stroke-width="0.6" rx="1.7"/>
<rect x="46.00" y="55.30" width="9.20" height="4.20" fill="#e0ddd8"/>
<line x1="46.70" y1="58.90" x2="47.70" y2="55.90" stroke="#f8f7f5" stroke-width="0.6"/>
<line x1="48.40" y1="58.90" x2="49.40" y2="55.90" stroke="#f8f7f5" stroke-width="0.6"/>
<line x1="50.10" y1="58.90" x2="51.10" y2="55.90" stroke="#f8f7f5" stroke-width="0.6"/>
<line x1="51.80" y1="58.90" x2="52.80" y2="55.90" stroke="#f8f7f5" stroke-width="0.6"/>
<line x1="53.50" y1="58.90" x2="54.50" y2="55.90" stroke="#f8f7f5" stroke-width="0.6"/>
<text x="49.50" y="74.60" font-size="6.2" fill="#2b2b2b" text-anchor="middle">10</text>
<rect x="40.00" y="81.23" width="41.90" height="2.35" fill="#d9d3cb" stroke="#958f86" stroke-width="0.55" rx="0.6"/>
<rect x="40.00" y="81.23" width="9.45" height="2.35" fill="#ec8640" stroke="#b7662c" stroke-width="0.55" rx="0.6"/>
<rect x="42.40" y="79.45" width="14.10" height="5.90" fill="url(#hnd)" stroke="#857f77" stroke-width="0.6" rx="1.7"/>
<rect x="44.85" y="80.30" width="9.20" height="4.20" fill="#e0ddd8"/>
<line x1="45.55" y1="83.90" x2="46.55" y2="80.90" stroke="#f8f7f5" stroke-width="0.6"/>
<line x1="47.25" y1="83.90" x2="48.25" y2="80.90" stroke="#f8f7f5" stroke-width="0.6"/>
<line x1="48.95" y1="83.90" x2="49.95" y2="80.90" stroke="#f8f7f5" stroke-width="0.6"/>
<line x1="50.65" y1="83.90" x2="51.65" y2="80.90" stroke="#f8f7f5" stroke-width="0.6"/>
<line x1="52.35" y1="83.90" x2="53.35" y2="80.90" stroke="#f8f7f5" stroke-width="0.6"/>
<rect x="39.40" y="93.40" width="8.10" height="8.00" fill="#f6f4f2" stroke="#857f77" stroke-width="0.6" rx="0.5"/>
<svg x="39.7" y="93.7" width="7.6" height="7.4" viewBox="39.7 93.7 7.6 7.4">
<text x="41.20" y="99.50" font-size="6.2" fill="#2b2b2b" text-anchor="start">@</text>
</svg>
<rect x="54.40" y="93.40" width="33.20" height="8.10" fill="#ffffff" stroke="#8f8a82" stroke-width="0.6" rx="0.6"/>
<text x="56.30" y="99.60" font-size="6.2" fill="#2b2b2b" text-anchor="start">1.6</text>
</g>
<g transform="translate(270,75)">
<rect x="7.05" y="37.85" width="89.80" height="69.00" fill="none" stroke="#ffffff" stroke-width="0.5"/>
<rect x="6.60" y="37.40" width="89.80" height="69.00" fill="none" stroke="#cdc8c1" stroke-width="0.6"/>
<rect x="7.60" y="36.20" width="19.40" height="2.60" fill="#efebe7"/>
<text x="8.60" y="39.30" font-size="6.2" fill="#2b2b2b" text-anchor="start">Joint9</text>
<rect x="37.15" y="42.95" width="54.10" height="18.90" fill="none" stroke="#ffffff" stroke-width="0.5"/>
<rect x="36.70" y="42.50" width="54.10" height="18.90" fill="none" stroke="#cdc8c1" stroke-width="0.6"/>
<rect x="37.90" y="41.30" width="28.20" height="2.60" fill="#efebe7"/>
<text x="38.90" y="43.80" font-size="6.2" fill="#2b2b2b" text-anchor="start">Position:</text>
<rect x="37.15" y="67.95" width="54.10" height="18.90" fill="none" stroke="#ffffff" stroke-width="0.5"/>
<rect x="36.70" y="67.50" width="54.10" height="18.90" fill="none" stroke="#cdc8c1" stroke-width="0.6"/>
<rect x="37.90" y="66.30" width="27.30" height="2.60" fill="#efebe7"/>
<text x="38.90" y="68.80" font-size="6.2" fill="#2b2b2b" text-anchor="start">Velocity:</text>
<rect x="11.45" y="53.45" width="23.60" height="10.60" fill="url(#btn)" stroke="#7f7971" stroke-width="0.55" rx="1.4"/>
<text x="23.25" y="61.70" font-size="6.2" fill="#2b2b2b" text-anchor="middle">Idle</text>
<rect x="11.45" y="66.10" width="23.60" height="10.60" fill="url(#btn)" stroke="#7f7971" stroke-width="0.55" rx="1.4"/>
<text x="23.25" y="74.35" font-size="6.2" fill="#2b2b2b" text-anchor="middle">Calib</text>
<rect x="11.45" y="78.75" width="23.60" height="10.60" fill="url(#btn)" stroke="#7f7971" stroke-width="0.55" rx="1.4"/>
<text x="23.25" y="87.00" font-size="6.2" fill="#2b2b2b" text-anchor="middle">Run!</text>
<rect x="11.45" y="91.40" width="23.60" height="10.60" fill="url(#btn)" stroke="#7f7971" stroke-width="0.55" rx="1.4"/>
<text x="23.25" y="99.65" font-size="6.2" fill="#2b2b2b" text-anchor="middle">PID</text>
<text x="47.25" y="49.60" font-size="6.2" fill="#2b2b2b" text-anchor="middle">0</text>
<rect x="40.00" y="56.23" width="41.90" height="2.35" fill="#d9d3cb" stroke="#958f86" stroke-width="0.55" rx="0.6"/>
<rect x="40.00" y="56.23" width="1.75" height="2.35" fill="#ec8640" stroke="#b7662c" stroke-width="0.55" rx="0.6"/>
<rect x="40.20" y="54.45" width="14.10" height="5.90" fill="url(#hnd)" stroke="#857f77" stroke-width="0.6" rx="1.7"/>
<rect x="42.65" y="55.30" width="9.20" height="4.20" fill="#e0ddd8"/>
<line x1="43.35" y1="58.90" x2="44.35" y2="55.90" stroke="#f8f7f5" stroke-width="0.6"/>
<line x1="45.05" y1="58.90" x2="46.05" y2="55.90" stroke="#f8f7f5" stroke-width="0.6"/>
<line x1="46.75" y1="58.90" x2="47.75" y2="55.90" stroke="#f8f7f5" stroke-width="0.6"/>
<line x1="48.45" y1="58.90" x2="49.45" y2="55.90" stroke="#f8f7f5" stroke-width="0.6"/>
<line x1="50.15" y1="58.90" x2="51.15" y2="55.90" stroke="#f8f7f5" stroke-width="0.6"/>
<text x="49.50" y="74.60" font-size="6.2" fill="#2b2b2b" text-anchor="middle">10</text>
<rect x="40.00" y="81.23" width="41.90" height="2.35" fill="#d9d3cb" stroke="#958f86" stroke-width="0.55" rx="0.6"/>
<rect x="40.00" y="81.23" width="9.45" height="2.35" fill="#ec8640" stroke="#b7662c" stroke-width="0.55" rx="0.6"/>
<rect x="42.40" y="79.45" width="14.10" height="5.90" fill="url(#hnd)" stroke="#857f77" stroke-width="0.6" rx="1.7"/>
<rect x="44.85" y="80.30" width="9.20" height="4.20" fill="#e0ddd8"/>
<line x1="45.55" y1="83.90" x2="46.55" y2="80.90" stroke="#f8f7f5" stroke-width="0.6"/>
<line x1="47.25" y1="83.90" x2="48.25" y2="80.90" stroke="#f8f7f5" stroke-width="0.6"/>
<line x1="48.95" y1="83.90" x2="49.95" y2="80.90" stroke="#f8f7f5" stroke-width="0.6"/>
<line x1="50.65" y1="83.90" x2="51.65" y2="80.90" stroke="#f8f7f5" stroke-width="0.6"/>
<line x1="52.35" y1="83.90" x2="53.35" y2="80.90" stroke="#f8f7f5" stroke-width="0.6"/>
<rect x="39.40" y="93.40" width="8.10" height="8.00" fill="#f6f4f2" stroke="#857f77" stroke-width="0.6" rx="0.5"/>
<svg x="39.7" y="93.7" width="7.6" height="7.4" viewBox="39.7 93.7 7.6 7.4">
<text x="41.20" y="99.50" font-size="6.2" fill="#2b2b2b" text-anchor="start">@</text>
</svg>
<rect x="54.40" y="93.40" width="33.20" height="8.10" fill="#ffffff" stroke="#8f8a82" stroke-width="0.6" rx="0.6"/>
<text x="56.30" y="99.60" font-size="6.2" fill="#2b2b2b" text-anchor="start">-0.2</text>
</g>
<g transform="translate(360,75)">
<rect x="7.05" y="37.85" width="89.80" height="69.00" fill="none" stroke="#ffffff" stroke-width="0.5"/>
<rect x="6.60" y="37.40" width="89.80" height="69.00" fill="none" stroke="#cdc8c1" stroke-width="0.6"/>
<rect x="7.60" y="36.20" width="22.80" height="2.60" fill="#efebe7"/>
<text x="8.60" y="39.30" font-size="6.2" fill="#2b2b2b" text-anchor="start">Joint10</text>
<rect x="37.15" y="42.95" width="54.10" height="18.90" fill="none" stroke="#ffffff" stroke-width="0.5"/>
<rect x="36.70" y="42.50" width="54.10" height="18.90" fill="none" stroke="#cdc8c1" stroke-width="0.6"/>
<rect x="37.90" y="41.30" width="28.20" height="2.60" fill="#efebe7"/>
<text x="38.90" y="43.80" font-size="6.2" fill="#2b2b2b" text-anchor="start">Position:</text>
<rect x="37.15" y="67.95" width="54.10" height="18.90" fill="none" stroke="#ffffff" stroke-width="0.5"/>
<rect x="36.70" y="67.50" width="54.10" height="18.90" fill="none" stroke="#cdc8c1" stroke-width="0.6"/>
<rect x="37.90" y="66.30" width="27.30" height="2.60" fill="#efebe7"/>
<text x="38.90" y="68.80" font-size="6.2" fill="#2b2b2b" text-anchor="start">Velocity:</text>
<rect x="11.45" y="53.45" width="23.60" height="10.60" fill="url(#btn)" stroke="#7f7971" stroke-width="0.55" rx="1.4"/>
<text x="23.25" y="61.70" font-size="6.2" fill="#2b2b2b" text-anchor="middle">Idle</text>
<rect x="11.45" y="66.10" width="23.60" height="10.60" fill="url(#btn)" stroke="#7f7971" stroke-width="0.55" rx="1.4"/>
<text x="23.25" y="74.35" font-size="6.2" fill="#2b2b2b" text-anchor="middle">Calib</text>
<rect x="11.45" y="78.75" width="23.60" height="10.60" fill="url(#btn)" stroke="#7f7971" stroke-width="0.55" rx="1.4"/>
<text x="23.25" y="87.00" font-size="6.2" fill="#2b2b2b" text-anchor="middle">Run!</text>
<rect x="11.45" y="91.40" width="23.60" height="10.60" fill="url(#btn)" stroke="#7f7971" stroke-width="0.55" rx="1.4"/>
<text x="23.25" y="99.65" font-size="6.2" fill="#2b2b2b" text-anchor="middle">PID</text>
<text x="47.25" y="49.60" font-size="6.2" fill="#2b2b2b" text-anchor="middle">0</text>
<rect x="40.00" y="56.23" width="41.90" height="2.35" fill="#d9d3cb" stroke="#958f86" stroke-width="0.55" rx="0.6"/>
<rect x="40.00" y="56.23" width="1.75" height="2.35" fill="#ec8640" stroke="#b7662c" stroke-width="0.55" rx="0.6"/>
<rect x="40.20" y="54.45" width="14.10" height="5.90" fill="url(#hnd)" stroke="#857f77" stroke-width="0.6" rx="1.7"/>
<rect x="42.65" y="55.30" width="9.20" height="4.20" fill="#e0ddd8"/>
<line x1="43.35" y1="58.90" x2="44.35" y2="55.90" stroke="#f8f7f5" stroke-width="0.6"/>
<line x1="45.05" y1="58.90" x2="46.05" y2="55.90" stroke="#f8f7f5" stroke-width="0.6"/>
<line x1="46.75" y1="58.90" x2="47.75" y2="55.90" stroke="#f8f7f5" stroke-width="0.6"/>
<line x1="48.45" y1="58.90" x2="49.45" y2="55.90" stroke="#f8f7f5" stroke-width="0.6"/>
<line x1="50.15" y1="58.90" x2="51.15" y2="55.90" stroke="#f8f7f5" stroke-width="0.6"/>
<text x="49.50" y="74.60" font-size="6.2" fill="#2b2b2b" text-anchor="middle">10</text>
<rect x="40.00" y="81.23" width="41.90" height="2.35" fill="#d9d3cb" stroke="#958f86" stroke-width="0.55" rx="0.6"/>
<rect x="40.00" y="81.23" width="9.45" height="2.35" fill="#ec8640" stroke="#b7662c" stroke-width="0.55" rx="0.6"/>
<rect x="42.40" y="79.45" width="14.10" height="5.90" fill="url(#hnd)" stroke="#857f77" stroke-width="0.6" rx="1.7"/>
<rect x="44.85" y="80.30" width="9.20" height="4.20" fill="#e0ddd8"/>
<line x1="45.55" y1="83.90" x2="46.55" y2="80.90" stroke="#f8f7f5" stroke-width="0.6"/>
<line x1="47.25" y1="83.90" x2="48.25" y2="80.90" stroke="#f8f7f5" stroke-width="0.6"/>
<line x1="48.95" y1="83.90" x2="49.95" y2="80.90" stroke="#f8f7f5" stroke-width="0.6"/>
<line x1="50.65" y1="83.90" x2="51.65" y2="80.90" stroke="#f8f7f5" stroke-width="0.6"/>
<line x1="52.35" y1="83.90" x2="53.35" y2="80.90" stroke="#f8f7f5" stroke-width="0.6"/>
<rect x="39.40" y="93.40" width="8.10" height="8.00" fill="#f6f4f2" stroke="#857f77" stroke-width="0.6" rx="0.5"/>
<svg x="39.7" y="93.7" width="7.6" height="7.4" viewBox="39.7 93.7 7.6 7.4">
<text x="41.20" y="99.50" font-size="6.2" fill="#2b2b2b" text-anchor="start">@</text>
</svg>
<rect x="54.40" y="93.40" width="33.20" height="8.10" fill="#ffffff" stroke="#8f8a82" stroke-width="0.6" rx="0.6"/>
<text x="56.30" y="99.60" font-size="6.2" fill="#2b2b2b" text-anchor="start">0.1</text>
</g>
<g transform="translate(450,75)">
<rect x="7.05" y="37.85" width="89.80" height="69.00" fill="none" stroke="#ffffff" stroke-width="0.5"/>
<rect x="6.60" y="37.40" width="89.80" height="69.00" fill="none" stroke="#cdc8c1" stroke-width="0.6"/>
<rect x="7.60" y="36.20" width="22.80" height="2.60" fill="#efebe7"/>
<text x="8.60" y="39.30" font-size="6.2" fill="#2b2b2b" text-anchor="start">Joint11</text>
<rect x="37.15" y="42.95" width="54.10" height="18.90" fill="none" stroke="#ffffff" stroke-width="0.5"/>
<rect x="36.70" y="42.50" width="54.10" height="18.90" fill="none" stroke="#cdc8c1" stroke-width="0.6"/>
<rect x="37.90" y="41.30" width="28.20" height="2.60" fill="#efebe7"/>
<text x="38.90" y="43.80" font-size="6.2" fill="#2b2b2b" text-anchor="start">Position:</text>
<rect x="37.15" y="67.95" width="54.10" height="18.90" fill="none" stroke="#ffffff" stroke-width="0.5"/>
<rect x="36.70" y="67.50" width="54.10" height="18.90" fill="none" stroke="#cdc8c1" stroke-width="0.6"/>
<rect x="37.90" y="66.30" width="27.30" height="2.60" fill="#efebe7"/>
<text x="38.90" y="68.80" font-size="6.2" fill="#2b2b2b" text-anchor="start">Velocity:</text>
<rect x="11.45" y="53.45" width="23.60" height="10.60" fill="url(#btn)" stroke="#7f7971" stroke-width="0.55" rx="1.4"/>
<text x="23.25" y="61.70" font-size="6.2" fill="#2b2b2b" text-anchor="middle">Idle</text>
<rect x="11.45" y="66.10" width="23.60" height="10.60" fill="url(#btn)" stroke="#7f7971" stroke-width="0.55" rx="1.4"/>
<text x="23.25" y="74.35" font-size="6.2" fill="#2b2b2b" text-anchor="middle">Calib</text>
<rect x="11.45" y="78.75" width="23.60" height="10.60" fill="url(#btn)" stroke="#7f7971" stroke-width="0.55" rx="1.4"/>
<text x="23.25" y="87.00" font-size="6.2" fill="#2b2b2b" text-anchor="middle">Run!</text>
<rect x="11.45" y="91.40" width="23.60" height="10.60" fill="url(#btn)" stroke="#7f7971" stroke-width="0.55" rx="1.4"/>
<text x="23.25" y="99.65" font-size="6.2" fill="#2b2b2b" text-anchor="middle">PID</text>
<text x="47.25" y="49.60" font-size="6.2" fill="#2b2b2b" text-anchor="middle">-0</text>
<rect x="40.00" y="56.23" width="41.90" height="2.35" fill="#d9d3cb" stroke="#958f86" stroke-width="0.55" rx="0.6"/>
<rect x="40.00" y="56.23" width="1.75" height="2.35" fill="#ec8640" stroke="#b7662c" stroke-width="0.55" rx="0.6"/>
<rect x="40.20" y="54.45" width="14.10" height="5.90" fill="url(#hnd)" stroke="#857f77" stroke-width="0.6" rx="1.7"/>
<rect x="42.65" y="55.30" width="9.20" height="4.20" fill="#e0ddd8"/>
<line x1="43.35" y1="58.90" x2="44.35" y2="55.90" stroke="#f8f7f5" stroke-width="0.6"/>
<line x1="45.05" y1="58.90" x2="46.05" y2="55.90" stroke="#f8f7f5" stroke-width="0.6"/>
<line x1="46.75" y1="58.90" x2="47.75" y2="55.90" stroke="#f8f7f5" stroke-width="0.6"/>
<line x1="48.45" y1="58.90" x2="49.45" y2="55.90" stroke="#f8f7f5" stroke-width="0.6"/>
<line x1="50.15" y1="58.90" x2="51.15" y2="55.90" stroke="#f8f7f5" stroke-width="0.6"/>
<text x="49.50" y="74.60" font-size="6.2" fill="#2b2b2b" text-anchor="middle">10</text>
<rect x="40.00" y="81.23" width="41.90" height="2.35" fill="#d9d3cb" stroke="#958f86" stroke-width="0.55" rx="0.6"/>
<rect x="40.00" y="81.23" width="9.45" height="2.35" fill="#ec8640" stroke="#b7662c" stroke-width="0.55" rx="0.6"/>
<rect x="42.40" y="79.45" width="14.10" height="5.90" fill="url(#hnd)" stroke="#857f77" stroke-width="0.6" rx="1.7"/>
<rect x="44.85" y="80.30" width="9.20" height="4.20" fill="#e0ddd8"/>
<line x1="45.55" y1="83.90" x2="46.55" y2="80.90" stroke="#f8f7f5" stroke-width="0.6"/>
<line x1="47.25" y1="83.90" x2="48.25" y2="80.90" stroke="#f8f7f5" stroke-width="0.6"/>
<line x1="48.95" y1="83.90" x2="49.95" y2="80.90" stroke="#f8f7f5" stroke-width="0.6"/>
<line x1="50.65" y1="83.90" x2="51.65" y2="80.90" stroke="#f8f7f5" stroke-width="0.6"/>
<line x1="52.35" y1="83.90" x2="53.35" y2="80.90" stroke="#f8f7f5" stroke-width="0.6"/>
<rect x="39.40" y="93.40" width="8.10" height="8.00" fill="#f6f4f2" stroke="#857f77" stroke-width="0.6" rx="0.5"/>
<svg x="39.7" y="93.7" width="7.6" height="7.4" viewBox="39.7 93.7 7.6 7.4">
<text x="41.20" y="99.50" font-size="6.2" fill="#2b2b2b" text-anchor="start">@</text>
</svg>
<rect x="54.40" y="93.40" width="33.20" height="8.10" fill="#ffffff" stroke="#8f8a82" stroke-width="0.6" rx="0.6"/>
<text x="56.30" y="99.60" font-size="6.2" fill="#2b2b2b" text-anchor="start">-0.2</text>
</g>
<g transform="translate(0,150)">
<rect x="7.05" y="37.85" width="89.80" height="69.00" fill="none" stroke="#ffffff" stroke-width="0.5"/>
<rect x="6.60" y="37.40" width="89.80" height="69.00" fill="none" stroke="#cdc8c1" stroke-width="0.6"/>
<rect x="7.60" y="36.20" width="22.80" height="2.60" fill="#efebe7"/>
<text x="8.60" y="39.30" font-size="6.2" fill="#2b2b2b" text-anchor="start">Joint12</text>
<rect x="37.15" y="42.95" width="54.10" height="18.90" fill="none" stroke="#ffffff" stroke-width="0.5"/>
<rect x="36.70" y="42.50" width="54.10" height="18.90" fill="none" stroke="#cdc8c1" stroke-width="0.6"/>
<rect x="37.90" y="41.30" width="28.20" height="2.60" fill="#efebe7"/>
<text x="38.90" y="43.80" font-size="6.2" fill="#2b2b2b" text-anchor="start">Position:</text>
<rect x="37.15" y="67.95" width="54.10" height="18.90" fill="none" stroke="#ffffff" stroke-width="0.5"/>
<rect x="36.70" y="67.50" width="54.10" height="18.90" fill="none" stroke="#cdc8c1" stroke-width="0.6"/>
<rect x="37.90" y="66.30" width="27.30" height="2.60" fill="#efebe7"/>
<text x="38.90" y="68.80" font-size="6.2" fill="#2b2b2b" text-anchor="start">Velocity:</text>
<rect x="11.45" y="53.45" width="23.60" height="10.60" fill="url(#btn)" stroke="#7f7971" stroke-width="0.55" rx="1.4"/>
<text x="23.25" y="61.70" font-size="6.2" fill="#2b2b2b" text-anchor="middle">Idle</text>
<rect x="11.45" y="66.10" width="23.60" height="10.60" fill="url(#btn)" stroke="#7f7971" stroke-width="0.55" rx="1.4"/>
<text x="23.25" y="74.35" font-size="6.2" fill="#2b2b2b" text-anchor="middle">Calib</text>
<rect x="11.45" y="78.75" width="23.60" height="10.60" fill="url(#btn)" stroke="#7f7971" stroke-width="0.55" rx="1.4"/>
<text x="23.25" y="87.00" font-size="6.2" fill="#2b2b2b" text-anchor="middle">Run!</text>
<rect x="11.45" y="91.40" width="23.60" height="10.60" fill="url(#btn)" stroke="#7f7971" stroke-width="0.55" rx="1.4"/>
<text x="23.25" y="99.65" font-size="6.2" fill="#2b2b2b" text-anchor="middle">PID</text>
<text x="47.25" y="49.60" font-size="6.2" fill="#2b2b2b" text-anchor="middle">0</text>
<rect x="40.00" y="56.23" width="41.90" height="2.35" fill="#d9d3cb" stroke="#958f86" stroke-width="0.55" rx="0.6"/>
<rect x="40.00" y="56.23" width="1.75" height="2.35" fill="#ec8640" stroke="#b7662c" stroke-width="0.55" rx="0.6"/>
<rect x="40.20" y="54.45" width="14.10" height="5.90" fill="url(#hnd)" stroke="#857f77" stroke-width="0.6" rx="1.7"/>
<rect x="42.65" y="55.30" width="9.20" height="4.20" fill="#e0ddd8"/>
<line x1="43.35" y1="58.90" x2="44.35" y2="55.90" stroke="#f8f7f5" stroke-width="0.6"/>
<line x1="45.05" y1="58.90" x2="46.05" y2="55.90" stroke="#f8f7f5" stroke-width="0.6"/>
<line x1="46.75" y1="58.90" x2="47.75" y2="55.90" stroke="#f8f7f5" stroke-width="0.6"/>
<line x1="48.45" y1="58.90" x2="49.45" y2="55.90" stroke="#f8f7f5" stroke-width="0.6"/>
<line x1="50.15" y1="58.90" x2="51.15" y2="55.90" stroke="#f8f7f5" stroke-width="0.6"/>
<text x="49.50" y="74.60" font-size="6.2" fill="#2b2b2b" text-anchor="middle">10</text>
<rect x="40.00" y="81.23" width="41.90" height="2.35" fill="#d9d3cb" stroke="#958f86" stroke-width="0.55" rx="0.6"/>
<rect x="40.00" y="81.23" width="9.45" height="2.35" fill="#ec8640" stroke="#b7662c" stroke-width="0.55" rx="0.6"/>
<rect x="42.40" y="79.45" width="14.10" height="5.90" fill="url(#hnd)" stroke="#857f77" stroke-width="0.6" rx="1.7"/>
<rect x="44.85" y="80.30" width="9.20" height="4.20" fill="#e0ddd8"/>
<line x1="45.55" y1="83.90" x2="46.55" y2="80.90" stroke="#f8f7f5" stroke-width="0.6"/>
<line x1="47.25" y1="83.90" x2="48.25" y2="80.90" stroke="#f8f7f5" stroke-width="0.6"/>
<line x1="48.95" y1="83.90" x2="49.95" y2="80.90" stroke="#f8f7f5" stroke-width="0.6"/>
<line x1="50.65" y1="83.90" x2="51.65" y2="80.90" stroke="#f8f7f5" stroke-width="0.6"/>
<line x1="52.35" y1="83.90" x2="53.35" y2="80.90" stroke="#f8f7f5" stroke-width="0.6"/>
<rect x="39.40" y="93.40" width="8.10" height="8.00" fill="#f6f4f2" stroke="#857f77" stroke-width="0.6" rx="0.5"/>
<svg x="39.7" y="93.7" width="7.6" height="7.4" viewBox="39.7 93.7 7.6 7.4">
<text x="41.20" y="99.50" font-size="6.2" fill="#2b2b2b" text-anchor="start">@</text>
</svg>
<rect x="54.40" y="93.40" width="33.20" height="8.10" fill="#ffffff" stroke="#8f8a82" stroke-width="0.6" rx="0.6"/>
<text x="56.30" y="99.60" font-size="6.2" fill="#2b2b2b" text-anchor="start">0.2</text>
</g>
<g transform="translate(90,150)">
<rect x="7.05" y="37.85" width="89.80" height="69.00" fill="none" stroke="#ffffff" stroke-width="0.5"/>
<rect x="6.60" y="37.40" width="89.80" height="69.00" fill="none" stroke="#cdc8c1" stroke-width="0.6"/>
<rect x="7.60" y="36.20" width="22.80" height="2.60" fill="#efebe7"/>
<text x="8.60" y="39.30" font-size="6.2" fill="#2b2b2b" text-anchor="start">Joint13</text>
<rect x="37.15" y="42.95" width="54.10" height="18.90" fill="none" stroke="#ffffff" stroke-width="0.5"/>
<rect x="36.70" y="42.50" width="54.10" height="18.90" fill="none" stroke="#cdc8c1" stroke-width="0.6"/>
<rect x="37.90" y="41.30" width="28.20" height="2.60" fill="#efebe7"/>
<text x="38.90" y="43.80" font-size="6.2" fill="#2b2b2b" text-anchor="start">Position:</text>
<rect x="37.15" y="67.95" width="54.10" height="18.90" fill="none" stroke="#ffffff" stroke-width="0.5"/>
<rect x="36.70" y="67.50" width="54.10" height="18.90" fill="none" stroke="#cdc8c1" stroke-width="0.6"/>
<rect x="37.90" y="66.30" width="27.30" height="2.60" fill="#efebe7"/>
<text x="38.90" y="68.80" font-size="6.2" fill="#2b2b2b" text-anchor="start">Velocity:</text>
<rect x="11.45" y="53.45" width="23.60" height="10.60" fill="url(#btn)" stroke="#7f7971" stroke-width="0.55" rx="1.4"/>
<text x="23.25" y="61.70" font-size="6.2" fill="#2b2b2b" text-anchor="middle">Idle</text>
<rect x="11.45" y="66.10" width="23.60" height="10.60" fill="url(#btn)" stroke="#7f7971" stroke-width="0.55" rx="1.4"/>
<text x="23.25" y="74.35" font-size="6.2" fill="#2b2b2b" text-anchor="middle">Calib</text>
<rect x="11.45" y="78.75" width="23.60" height="10.60" fill="url(#btn)" stroke="#7f7971" stroke-width="0.55" rx="1.4"/>
<text x="23.25" y="87.00" font-size="6.2" fill="#2b2b2b" text-anchor="middle">Run!</text>
<rect x="11.45" y="91.40" width="23.60" height="10.60" fill="url(#btn)" stroke="#7f7971" stroke-width="0.55" rx="1.4"/>
<text x="23.25" y="99.65" font-size="6.2" fill="#2b2b2b" text-anchor="middle">PID</text>
<text x="47.25" y="49.60" font-size="6.2" fill="#2b2b2b" text-anchor="middle">-0</text>
<rect x="40.00" y="56.23" width="41.90" height="2.35" fill="#d9d3cb" stroke="#958f86" stroke-width="0.55" rx="0.6"/>
<rect x="40.00" y="56.23" width="1.75" height="2.35" fill="#ec8640" stroke="#b7662c" stroke-width="0.55" rx="0.6"/>
<rect x="40.20" y="54.45" width="14.10" height="5.90" fill="url(#hnd)" stroke="#857f77" stroke-width="0.6" rx="1.7"/>
<rect x="42.65" y="55.30" width="9.20" height="4.20" fill="#e0ddd8"/>
<line x1="43.35" y1="58.90" x2="44.35" y2="55.90" stroke="#f8f7f5" stroke-width="0.6"/>
<line x1="45.05" y1="58.90" x2="46.05" y2="55.90" stroke="#f8f7f5" stroke-width="0.6"/>
<line x1="46.75" y1="58.90" x2="47.75" y2="55.90" stroke="#f8f7f5" stroke-width="0.6"/>
<line x1="48.45" y1="58.90" x2="49.45" y2="55.90" stroke="#f8f7f5" stroke-width="0.6"/>
<line x1="50.15" y1="58.90" x2="51.15" y2="55.90" stroke="#f8f7f5" stroke-width="0.6"/>
<text x="49.50" y="74.60" font-size="6.2" fill="#2b2b2b" text-anchor="middle">10</text>
<rect x="40.00" y="81.23" width="41.90" height="2.35" fill="#d9d3cb" stroke="#958f86" stroke-width="0.55" rx="0.6"/>
<rect x="40.00" y="81.23" width="9.45" height="2.35" fill="#ec8640" stroke="#b7662c" stroke-width="0.55" rx="0.6"/>
<rect x="42.40" y="79.45" width="14.10" height="5.90" fill="url(#hnd)" stroke="#857f77" stroke-width="0.6" rx="1.7"/>
<rect x="44.85" y="80.30" width="9.20" height="4.20" fill="#e0ddd8"/>
<line x1="45.55" y1="83.90" x2="46.55" y2="80.90" stroke="#f8f7f5" stroke-width="0.6"/>
<line x1="47.25" y1="83.90" x2="48.25" y2="80.90" stroke="#f8f7f5" stroke-width="0.6"/>
<line x1="48.95" y1="83.90" x2="49.95" y2="80.90" stroke="#f8f7f5" stroke-width="0.6"/>
<line x1="50.65" y1="83.90" x2="51.65" y2="80.90" stroke="#f8f7f5" stroke-width="0.6"/>
<line x1="52.35" y1="83.90" x2="53.35" y2="80.90" stroke="#f8f7f5" stroke-width="0.6"/>
<rect x="39.40" y="93.40" width="8.10" height="8.00" fill="#f6f4f2" stroke="#857f77" stroke-width="0.6" rx="0.5"/>
<svg x="39.7" y="93.7" width="7.6" height="7.4" viewBox="39.7 93.7 7.6 7.4">
<text x="41.20" y="99.50" font-size="6.2" fill="#2b2b2b" text-anchor="start">@</text>
</svg>
<rect x="54.40" y="93.40" width="33.20" height="8.10" fill="#ffffff" stroke="#8f8a82" stroke-width="0.6" rx="0.6"/>
<text x="56.30" y="99.60" font-size="6.2" fill="#2b2b2b" text-anchor="start">-0.2</text>
</g>
<g transform="translate(180,150)">
<rect x="7.05" y="37.85" width="89.80" height="69.00" fill="none" stroke="#ffffff" stroke-width="0.5"/>
<rect x="6.60" y="37.40" width="89.80" height="69.00" fill="none" stroke="#cdc8c1" stroke-width="0.6"/>
<rect x="7.60" y="36.20" width="22.80" height="2.60" fill="#efebe7"/>
<text x="8.60" y="39.30" font-size="6.2" fill="#2b2b2b" text-anchor="start">Joint14</text>
<rect x="37.15" y="42.95" width="54.10" height="18.90" fill="none" stroke="#ffffff" stroke-width="0.5"/>
<rect x="36.70" y="42.50" width="54.10" height="18.90" fill="none" stroke="#cdc8c1" stroke-width="0.6"/>
<rect x="37.90" y="41.30" width="28.20" height="2.60" fill="#efebe7"/>
<text x="38.90" y="43.80" font-size="6.2" fill="#2b2b2b" text-anchor="start">Position:</text>
<rect x="37.15" y="67.95" width="54.10" height="18.90" fill="none" stroke="#ffffff" stroke-width="0.5"/>
<rect x="36.70" y="67.50" width="54.10" height="18.90" fill="none" stroke="#cdc8c1" stroke-width="0.6"/>
<rect x="37.90" y="66.30" width="27.30" height="2.60" fill="#efebe7"/>
<text x="38.90" y="68.80" font-size="6.2" fill="#2b2b2b" text-anchor="start">Velocity:</text>
<rect x="11.45" y="53.45" width="23.60" height="10.60" fill="url(#btn)" stroke="#7f7971" stroke-width="0.55" rx="1.4"/>
<text x="23.25" y="61.70" font-size="6.2" fill="#2b2b2b" text-anchor="middle">Idle</text>
<rect x="11.45" y="66.10" width="23.60" height="10.60" fill="url(#btn)" stroke="#7f7971" stroke-width="0.55" rx="1.4"/>
<text x="23.25" y="74.35" font-size="6.2" fill="#2b2b2b" text-anchor="middle">Calib</text>
<rect x="11.45" y="78.75" width="23.60" height="10.60" fill="url(#btn)" stroke="#7f7971" stroke-width="0.55" rx="1.4"/>
<text x="23.25" y="87.00" font-size="6.2" fill="#2b2b2b" text-anchor="middle">Run!</text>
<rect x="11.45" y="91.40" width="23.60" height="10.60" fill="url(#btn)" stroke="#7f7971" stroke-width="0.55" rx="1.4"/>
<text x="23.25" y="99.65" font-size="6.2" fill="#2b2b2b" text-anchor="middle">PID</text>
<text x="47.25" y="49.60" font-size="6.2" fill="#2b2b2b" text-anchor="middle">0</text>
<rect x="40.00" y="56.23" width="41.90" height="2.35" fill="#d9d3cb" stroke="#958f86" stroke-width="0.55" rx="0.6"/>
<rect x="40.00" y="56.23" width="1.75" height="2.35" fill="#ec8640" stroke="#b7662c" stroke-width="0.55" rx="0.6"/>
<rect x="40.20" y="54.45" width="14.10" height="5.90" fill="url(#hnd)" stroke="#857f77" stroke-width="0.6" rx="1.7"/>
<rect x="42.65" y="55.30" width="9.20" height="4.20" fill="#e0ddd8"/>
<line x1="43.35" y1="58.90" x2="44.35" y2="55.90" stroke="#f8f7f5" stroke-width="0.6"/>
<line x1="45.05" y1="58.90" x2="46.05" y2="55.90" stroke="#f8f7f5" stroke-width="0.6"/>
<line x1="46.75" y1="58.90" x2="47.75" y2="55.90" stroke="#f8f7f5" stroke-width="0.6"/>
<line x1="48.45" y1="58.90" x2="49.45" y2="55.90" stroke="#f8f7f5" stroke-width="0.6"/>
<line x1="50.15" y1="58.90" x2="51.15" y2="55.90" stroke="#f8f7f5" stroke-width="0.6"/>
<text x="49.50" y="74.60" font-size="6.2" fill="#2b2b2b" text-anchor="middle">10</text>
<rect x="40.00" y="81.23" width="41.90" height="2.35" fill="#d9d3cb" stroke="#958f86" stroke-width="0.55" rx="0.6"/>
<rect x="40.00" y="81.23" width="9.45" height="2.35" fill="#ec8640" stroke="#b7662c" stroke-width="0.55" rx="0.6"/>
<rect x="42.40" y="79.45" width="14.10" height="5.90" fill="url(#hnd)" stroke="#857f77" stroke-width="0.6" rx="1.7"/>
<rect x="44.85" y="80.30" width="9.20" height="4.20" fill="#e0ddd8"/>
<line x1="45.55" y1="83.90" x2="46.55" y2="80.90" stroke="#f8f7f5" stroke-width="0.6"/>
<line x1="47.25" y1="83.90" x2="48.25" y2="80.90" stroke="#f8f7f5" stroke-width="0.6"/>
<line x1="48.95" y1="83.90" x2="49.95" y2="80.90" stroke="#f8f7f5" stroke-width="0.6"/>
<line x1="50.65" y1="83.90" x2="51.65" y2="80.90" stroke="#f8f7f5" stroke-width="0.6"/>
<line x1="52.35" y1="83.90" x2="53.35" y2="80.90" stroke="#f8f7f5" stroke-width="0.6"/>
<rect x="39.40" y="93.40" width="8.10" height="8.00" fill="#f6f4f2" stroke="#857f77" stroke-width="0.6" rx="0.5"/>
<svg x="39.7" y="93.7" width="7.6" height="7.4" viewBox="39.7 93.7 7.6 7.4">
<text x="41.20" y="99.50" font-size="6.2" fill="#2b2b2b" text-anchor="start">@</text>
</svg>
<rect x="54.40" y="93.40" width="33.20" height="8.10" fill="#ffffff" stroke="#8f8a82" stroke-width="0.6" rx="0.6"/>
<text x="56.30" y="99.60" font-size="6.2" fill="#2b2b2b" text-anchor="start">0.1</text>
</g>
<g transform="translate(270,150)">
<rect x="7.05" y="37.85" width="89.80" height="69.00" fill="none" stroke="#ffffff" stroke-width="0.5"/>
<rect x="6.60" y="37.40" width="89.80" height="69.00" fill="none" stroke="#cdc8c1" stroke-width="0.6"/>
<rect x="7.60" y="36.20" width="22.80" height="2.60" fill="#efebe7"/>
<text x="8.60" y="39.30" font-size="6.2" fill="#2b2b2b" text-anchor="start">Joint15</text>
<rect x="37.15" y="42.95" width="54.10" height="18.90" fill="none" stroke="#ffffff" stroke-width="0.5"/>
<rect x="36.70" y="42.50" width="54.10" height="18.90" fill="none" stroke="#cdc8c1" stroke-width="0.6"/>
<rect x="37.90" y="41.30" width="28.20" height="2.60" fill="#efebe7"/>
<text x="38.90" y="43.80" font-size="6.2" fill="#2b2b2b" text-anchor="start">Position:</text>
<rect x="37.15" y="67.95" width="54.10" height="18.90" fill="none" stroke="#ffffff" stroke-width="0.5"/>
<rect x="36.70" y="67.50" width="54.10" height="18.90" fill="none" stroke="#cdc8c1" stroke-width="0.6"/>
<rect x="37.90" y="66.30" width="27.30" height="2.60" fill="#efebe7"/>
<text x="38.90" y="68.80" font-size="6.2" fill="#2b2b2b" text-anchor="start">Velocity:</text>
<rect x="11.45" y="53.45" width="23.60" height="10.60" fill="url(#btn)" stroke="#7f7971" stroke-width="0.55" rx="1.4"/>
<text x="23.25" y="61.70" font-size="6.2" fill="#2b2b2b" text-anchor="middle">Idle</text>
<rect x="11.45" y="66.10" width="23.60" height="10.60" fill="url(#btn)" stroke="#7f7971" stroke-width="0.55" rx="1.4"/>
<text x="23.25" y="74.35" font-size="6.2" fill="#2b2b2b" text-anchor="middle">Calib</text>
<rect x="11.45" y="78.75" width="23.60" height="10.60" fill="url(#btn)" stroke="#7f7971" stroke-width="0.55" rx="1.4"/>
<text x="23.25" y="87.00" font-size="6.2" fill="#2b2b2b" text-anchor="middle">Run!</text>
<rect x="11.45" y="91.40" width="23.60" height="10.60" fill="url(#btn)" stroke="#7f7971" stroke-width="0.55" rx="1.4"/>
<text x="23.25" y="99.65" font-size="6.2" fill="#2b2b2b" text-anchor="middle">PID</text>
<text x="49.40" y="49.60" font-size="6.2" fill="#2b2b2b" text-anchor="middle">10</text>
<rect x="40.00" y="56.23" width="41.90" height="2.35" fill="#d9d3cb" stroke="#958f86" stroke-width="0.55" rx="0.6"/>
<rect x="40.00" y="56.23" width="9.40" height="2.35" fill="#ec8640" stroke="#b7662c" stroke-width="0.55" rx="0.6"/>
<rect x="42.35" y="54.45" width="14.10" height="5.90" fill="url(#hnd)" stroke="#857f77" stroke-width="0.6" rx="1.7"/>
<rect x="44.80" y="55.30" width="9.20" height="4.20" fill="#e0ddd8"/>
<line x1="45.50" y1="58.90" x2="46.50" y2="55.90" stroke="#f8f7f5" stroke-width="0.6"/>
<line x1="47.20" y1="58.90" x2="48.20" y2="55.90" stroke="#f8f7f5" stroke-width="0.6"/>
<line x1="48.90" y1="58.90" x2="49.90" y2="55.90" stroke="#f8f7f5" stroke-width="0.6"/>
<line x1="50.60" y1="58.90" x2="51.60" y2="55.90" stroke="#f8f7f5" stroke-width="0.6"/>
<line x1="52.30" y1="58.90" x2="53.30" y2="55.90" stroke="#f8f7f5" stroke-width="0.6"/>
<text x="49.50" y="74.60" font-size="6.2" fill="#2b2b2b" text-anchor="middle">10</text>
<rect x="40.00" y="81.23" width="41.90" height="2.35" fill="#d9d3cb" stroke="#958f86" stroke-width="0.55" rx="0.6"/>
<rect x="40.00" y="81.23" width="9.45" height="2.35" fill="#ec8640" stroke="#b7662c" stroke-width="0.55" rx="0.6"/>
<rect x="42.40" y="79.45" width="14.10" height="5.90" fill="url(#hnd)" stroke="#857f77" stroke-width="0.6" rx="1.7"/>
<rect x="44.85" y="80.30" width="9.20" height="4.20" fill="#e0ddd8"/>
<line x1="45.55" y1="83.90" x2="46.55" y2="80.90" stroke="#f8f7f5" stroke-width="0.6"/>
<line x1="47.25" y1="83.90" x2="48.25" y2="80.90" stroke="#f8f7f5" stroke-width="0.6"/>
<line x1="48.95" y1="83.90" x2="49.95" y2="80.90" stroke="#f8f7f5" stroke-width="0.6"/>
<line x1="50.65" y1="83.90" x2="51.65" y2="80.90" stroke="#f8f7f5" stroke-width="0.6"/>
<line x1="52.35" y1="83.90" x2="53.35" y2="80.90" stroke="#f8f7f5" stroke-width="0.6"/>
<rect x="39.40" y="93.40" width="8.10" height="8.00" fill="#f6f4f2" stroke="#857f77" stroke-width="0.6" rx="0.5"/>
<svg x="39.7" y="93.7" width="7.6" height="7.4" viewBox="39.7 93.7 7.6 7.4">
<text x="41.20" y="99.50" font-size="6.2" fill="#2b2b2b" text-anchor="start">@</text>
</svg>
<rect x="54.40" y="93.40" width="33.20" height="8.10" fill="#ffffff" stroke="#8f8a82" stroke-width="0.6" rx="0.6"/>
<text x="56.30" y="99.60" font-size="6.2" fill="#2b2b2b" text-anchor="start">10.3</text>
</g>
<rect x="6.30" y="291.30" width="487.10" height="128.40" fill="#fbfbfa"/>
<rect x="6.30" y="317.95" width="487.10" height="12.45" fill="#f4f2ef"/>
<rect x="6.30" y="342.85" width="487.10" height="12.45" fill="#f4f2ef"/>
<rect x="6.30" y="367.75" width="487.10" height="12.45" fill="#f4f2ef"/>
<rect x="6.30" y="392.65" width="487.10" height="12.45" fill="#f4f2ef"/>
<rect x="6.30" y="291.30" width="487.10" height="12.90" fill="url(#hdr)"/>
<line x1="6.30" y1="304.20" x2="493.40" y2="304.20" stroke="#aaa49b" stroke-width="0.7"/>
<svg x="6.3" y="292" width="28.9" height="12" viewBox="6.3 292 28.9 12">
<text x="8.00" y="301.00" font-size="6.35" fill="#2b2b2b" text-anchor="start">Sequence</text>
</svg>
<line x1="35.50" y1="293.30" x2="35.50" y2="302.60" stroke="#b9b4ac" stroke-width="0.6"/>
<line x1="36.00" y1="293.30" x2="36.00" y2="302.60" stroke="#ffffff" stroke-width="0.5"/>
<text x="37.50" y="301.00" font-size="6.35" fill="#2b2b2b" text-anchor="start">Timing</text>
<line x1="65.70" y1="293.30" x2="65.70" y2="302.60" stroke="#b9b4ac" stroke-width="0.6"/>
<line x1="66.20" y1="293.30" x2="66.20" y2="302.60" stroke="#ffffff" stroke-width="0.5"/>
<text x="67.70" y="301.00" font-size="6.35" fill="#2b2b2b" text-anchor="start">Joint0</text>
<line x1="90.70" y1="293.30" x2="90.70" y2="302.60" stroke="#b9b4ac" stroke-width="0.6"/>
<line x1="91.20" y1="293.30" x2="91.20" y2="302.60" stroke="#ffffff" stroke-width="0.5"/>
<text x="92.70" y="301.00" font-size="6.35" fill="#2b2b2b" text-anchor="start">Joint1</text>
<line x1="115.70" y1="293.30" x2="115.70" y2="302.60" stroke="#b9b4ac" stroke-width="0.6"/>
<line x1="116.20" y1="293.30" x2="116.20" y2="302.60" stroke="#ffffff" stroke-width="0.5"/>
<text x="117.70" y="301.00" font-size="6.35" fill="#2b2b2b" text-anchor="start">Joint2</text>
<line x1="140.70" y1="293.30" x2="140.70" y2="302.60" stroke="#b9b4ac" stroke-width="0.6"/>
<line x1="141.20" y1="293.30" x2="141.20" y2="302.60" stroke="#ffffff" stroke-width="0.5"/>
<text x="142.70" y="301.00" font-size="6.35" fill="#2b2b2b" text-anchor="start">Joint3</text>
<line x1="165.70" y1="293.30" x2="165.70" y2="302.60" stroke="#b9b4ac" stroke-width="0.6"/>
<line x1="166.20" y1="293.30" x2="166.20" y2="302.60" stroke="#ffffff" stroke-width="0.5"/>
<text x="167.70" y="301.00" font-size="6.35" fill="#2b2b2b" text-anchor="start">Joint4</text>
<line x1="190.70" y1="293.30" x2="190.70" y2="302.60" stroke="#b9b4ac" stroke-width="0.6"/>
<line x1="191.20" y1="293.30" x2="191.20" y2="302.60" stroke="#ffffff" stroke-width="0.5"/>
<text x="192.70" y="301.00" font-size="6.35" fill="#2b2b2b" text-anchor="start">Joint5</text>
<line x1="215.70" y1="293.30" x2="215.70" y2="302.60" stroke="#b9b4ac" stroke-width="0.6"/>
<line x1="216.20" y1="293.30" x2="216.20" y2="302.60" stroke="#ffffff" stroke-width="0.5"/>
<text x="217.70" y="301.00" font-size="6.35" fill="#2b2b2b" text-anchor="start">Joint6</text>
<line x1="240.70" y1="293.30" x2="240.70" y2="302.60" stroke="#b9b4ac" stroke-width="0.6"/>
<line x1="241.20" y1="293.30" x2="241.20" y2="302.60" stroke="#ffffff" stroke-width="0.5"/>
<text x="242.70" y="301.00" font-size="6.35" fill="#2b2b2b" text-anchor="start">Joint7</text>
<line x1="265.70" y1="293.30" x2="265.70" y2="302.60" stroke="#b9b4ac" stroke-width="0.6"/>
<line x1="266.20" y1="293.30" x2="266.20" y2="302.60" stroke="#ffffff" stroke-width="0.5"/>
<text x="267.70" y="301.00" font-size="6.35" fill="#2b2b2b" text-anchor="start">Joint8</text>
<line x1="290.70" y1="293.30" x2="290.70" y2="302.60" stroke="#b9b4ac" stroke-width="0.6"/>
<line x1="291.20" y1="293.30" x2="291.20" y2="302.60" stroke="#ffffff" stroke-width="0.5"/>
<text x="292.70" y="301.00" font-size="6.35" fill="#2b2b2b" text-anchor="start">Joint9</text>
<line x1="315.70" y1="293.30" x2="315.70" y2="302.60" stroke="#b9b4ac" stroke-width="0.6"/>
<line x1="316.20" y1="293.30" x2="316.20" y2="302.60" stroke="#ffffff" stroke-width="0.5"/>
<text x="317.70" y="301.00" font-size="6.35" fill="#2b2b2b" text-anchor="start">Joint10</text>
<line x1="340.70" y1="293.30" x2="340.70" y2="302.60" stroke="#b9b4ac" stroke-width="0.6"/>
<line x1="341.20" y1="293.30" x2="341.20" y2="302.60" stroke="#ffffff" stroke-width="0.5"/>
<text x="342.70" y="301.00" font-size="6.35" fill="#2b2b2b" text-anchor="start">Joint11</text>
<line x1="365.70" y1="293.30" x2="365.70" y2="302.60" stroke="#b9b4ac" stroke-width="0.6"/>
<line x1="366.20" y1="293.30" x2="366.20" y2="302.60" stroke="#ffffff" stroke-width="0.5"/>
<text x="367.70" y="301.00" font-size="6.35" fill="#2b2b2b" text-anchor="start">Joint12</text>
<line x1="390.70" y1="293.30" x2="390.70" y2="302.60" stroke="#b9b4ac" stroke-width="0.6"/>
<line x1="391.20" y1="293.30" x2="391.20" y2="302.60" stroke="#ffffff" stroke-width="0.5"/>
<text x="392.70" y="301.00" font-size="6.35" fill="#2b2b2b" text-anchor="start">Joint13</text>
<line x1="415.70" y1="293.30" x2="415.70" y2="302.60" stroke="#b9b4ac" stroke-width="0.6"/>
<line x1="416.20" y1="293.30" x2="416.20" y2="302.60" stroke="#ffffff" stroke-width="0.5"/>
<text x="417.70" y="301.00" font-size="6.35" fill="#2b2b2b" text-anchor="start">Joint14</text>
<line x1="440.70" y1="293.30" x2="440.70" y2="302.60" stroke="#b9b4ac" stroke-width="0.6"/>
<line x1="441.20" y1="293.30" x2="441.20" y2="302.60" stroke="#ffffff" stroke-width="0.5"/>
<text x="442.70" y="301.00" font-size="6.35" fill="#2b2b2b" text-anchor="start">Joint15</text>
<text x="9.00" y="314.00" font-size="6.2" fill="#2b2b2b" text-anchor="start">-1</text>
<text x="39.10" y="314.00" font-size="6.2" fill="#2b2b2b" text-anchor="start">-0.10</text>
<text x="68.90" y="314.00" font-size="6.2" fill="#2b2b2b" text-anchor="start">0.00</text>
<text x="93.90" y="314.00" font-size="6.2" fill="#2b2b2b" text-anchor="start">0.00</text>
<text x="118.90" y="314.00" font-size="6.2" fill="#2b2b2b" text-anchor="start">0.00</text>
<text x="143.90" y="314.00" font-size="6.2" fill="#2b2b2b" text-anchor="start">0.00</text>
<text x="168.90" y="314.00" font-size="6.2" fill="#2b2b2b" text-anchor="start">0.00</text>
<text x="193.90" y="314.00" font-size="6.2" fill="#2b2b2b" text-anchor="start">0.00</text>
<text x="218.90" y="314.00" font-size="6.2" fill="#2b2b2b" text-anchor="start">0.00</text>
<text x="243.90" y="314.00" font-size="6.2" fill="#2b2b2b" text-anchor="start">0.00</text>
<text x="268.90" y="314.00" font-size="6.2" fill="#2b2b2b" text-anchor="start">0.00</text>
<text x="293.90" y="314.00" font-size="6.2" fill="#2b2b2b" text-anchor="start">0.00</text>
<text x="318.90" y="314.00" font-size="6.2" fill="#2b2b2b" text-anchor="start">0.00</text>
<text x="343.90" y="314.00" font-size="6.2" fill="#2b2b2b" text-anchor="start">0.00</text>
<text x="368.90" y="314.00" font-size="6.2" fill="#2b2b2b" text-anchor="start">0.00</text>
<text x="393.90" y="314.00" font-size="6.2" fill="#2b2b2b" text-anchor="start">0.00</text>
<text x="418.90" y="314.00" font-size="6.2" fill="#2b2b2b" text-anchor="start">0.00</text>
<text x="443.90" y="314.00" font-size="6.2" fill="#2b2b2b" text-anchor="start">0.00</text>
<text x="9.00" y="326.47" font-size="6.2" fill="#2b2b2b" text-anchor="start">-1</text>
<text x="39.10" y="326.47" font-size="6.2" fill="#2b2b2b" text-anchor="start">-0.10</text>
<text x="68.90" y="326.47" font-size="6.2" fill="#2b2b2b" text-anchor="start">0.00</text>
<text x="93.90" y="326.47" font-size="6.2" fill="#2b2b2b" text-anchor="start">0.00</text>
<text x="118.90" y="326.47" font-size="6.2" fill="#2b2b2b" text-anchor="start">0.00</text>
<text x="143.90" y="326.47" font-size="6.2" fill="#2b2b2b" text-anchor="start">0.00</text>
<text x="168.90" y="326.47" font-size="6.2" fill="#2b2b2b" text-anchor="start">0.00</text>
<text x="193.90" y="326.47" font-size="6.2" fill="#2b2b2b" text-anchor="start">0.00</text>
<text x="218.90" y="326.47" font-size="6.2" fill="#2b2b2b" text-anchor="start">0.00</text>
<text x="243.90" y="326.47" font-size="6.2" fill="#2b2b2b" text-anchor="start">0.00</text>
<text x="268.90" y="326.47" font-size="6.2" fill="#2b2b2b" text-anchor="start">0.00</text>
<text x="293.90" y="326.47" font-size="6.2" fill="#2b2b2b" text-anchor="start">0.00</text>
<text x="318.90" y="326.47" font-size="6.2" fill="#2b2b2b" text-anchor="start">0.00</text>
<text x="343.90" y="326.47" font-size="6.2" fill="#2b2b2b" text-anchor="start">0.00</text>
<text x="368.90" y="326.47" font-size="6.2" fill="#2b2b2b" text-anchor="start">0.00</text>
<text x="393.90" y="326.47" font-size="6.2" fill="#2b2b2b" text-anchor="start">0.00</text>
<text x="418.90" y="326.47" font-size="6.2" fill="#2b2b2b" text-anchor="start">0.00</text>
<text x="443.90" y="326.47" font-size="6.2" fill="#2b2b2b" text-anchor="start">0.00</text>
<text x="9.00" y="338.94" font-size="6.2" fill="#2b2b2b" text-anchor="start">-1</text>
<text x="39.10" y="338.94" font-size="6.2" fill="#2b2b2b" text-anchor="start">-0.10</text>
<text x="68.90" y="338.94" font-size="6.2" fill="#2b2b2b" text-anchor="start">0.00</text>
<text x="93.90" y="338.94" font-size="6.2" fill="#2b2b2b" text-anchor="start">0.00</text>
<text x="118.90" y="338.94" font-size="6.2" fill="#2b2b2b" text-anchor="start">0.00</text>
<text x="143.90" y="338.94" font-size="6.2" fill="#2b2b2b" text-anchor="start">0.00</text>
<text x="168.90" y="338.94" font-size="6.2" fill="#2b2b2b" text-anchor="start">0.00</text>
<text x="193.90" y="338.94" font-size="6.2" fill="#2b2b2b" text-anchor="start">0.00</text>
<text x="218.90" y="338.94" font-size="6.2" fill="#2b2b2b" text-anchor="start">0.00</text>
<text x="243.90" y="338.94" font-size="6.2" fill="#2b2b2b" text-anchor="start">0.00</text>
<text x="268.90" y="338.94" font-size="6.2" fill="#2b2b2b" text-anchor="start">0.00</text>
<text x="293.90" y="338.94" font-size="6.2" fill="#2b2b2b" text-anchor="start">0.00</text>
<text x="318.90" y="338.94" font-size="6.2" fill="#2b2b2b" text-anchor="start">0.00</text>
<text x="343.90" y="338.94" font-size="6.2" fill="#2b2b2b" text-anchor="start">0.00</text>
<text x="368.90" y="338.94" font-size="6.2" fill="#2b2b2b" text-anchor="start">0.00</text>
<text x="393.90" y="338.94" font-size="6.2" fill="#2b2b2b" text-anchor="start">0.00</text>
<text x="418.90" y="338.94" font-size="6.2" fill="#2b2b2b" text-anchor="start">0.00</text>
<text x="443.90" y="338.94" font-size="6.2" fill="#2b2b2b" text-anchor="start">0.00</text>
<text x="9.00" y="351.41" font-size="6.2" fill="#2b2b2b" text-anchor="start">-1</text>
<text x="39.10" y="351.41" font-size="6.2" fill="#2b2b2b" text-anchor="start">-0.10</text>
<text x="68.90" y="351.41" font-size="6.2" fill="#2b2b2b" text-anchor="start">0.00</text>
<text x="93.90" y="351.41" font-size="6.2" fill="#2b2b2b" text-anchor="start">0.00</text>
<text x="118.90" y="351.41" font-size="6.2" fill="#2b2b2b" text-anchor="start">0.00</text>
<text x="143.90" y="351.41" font-size="6.2" fill="#2b2b2b" text-anchor="start">0.00</text>
<text x="168.90" y="351.41" font-size="6.2" fill="#2b2b2b" text-anchor="start">0.00</text>
<text x="193.90" y="351.41" font-size="6.2" fill="#2b2b2b" text-anchor="start">0.00</text>
<text x="218.90" y="351.41" font-size="6.2" fill="#2b2b2b" text-anchor="start">0.00</text>
<text x="243.90" y="351.41" font-size="6.2" fill="#2b2b2b" text-anchor="start">0.00</text>
<text x="268.90" y="351.41" font-size="6.2" fill="#2b2b2b" text-anchor="start">0.00</text>
<text x="293.90" y="351.41" font-size="6.2" fill="#2b2b2b" text-anchor="start">0.00</text>
<text x="318.90" y="351.41" font-size="6.2" fill="#2b2b2b" text-anchor="start">0.00</text>
<text x="343.90" y="351.41" font-size="6.2" fill="#2b2b2b" text-anchor="start">0.00</text>
<text x="368.90" y="351.41" font-size="6.2" fill="#2b2b2b" text-anchor="start">0.00</text>
<text x="393.90" y="351.41" font-size="6.2" fill="#2b2b2b" text-anchor="start">0.00</text>
<text x="418.90" y="351.41" font-size="6.2" fill="#2b2b2b" text-anchor="start">0.00</text>
<text x="443.90" y="351.41" font-size="6.2" fill="#2b2b2b" text-anchor="start">0.00</text>
<text x="9.00" y="363.88" font-size="6.2" fill="#2b2b2b" text-anchor="start">-1</text>
<text x="39.10" y="363.88" font-size="6.2" fill="#2b2b2b" text-anchor="start">-0.10</text>
<text x="68.90" y="363.88" font-size="6.2" fill="#2b2b2b" text-anchor="start">0.00</text>
<text x="93.90" y="363.88" font-size="6.2" fill="#2b2b2b" text-anchor="start">0.00</text>
<text x="118.90" y="363.88" font-size="6.2" fill="#2b2b2b" text-anchor="start">0.00</text>
<text x="143.90" y="363.88" font-size="6.2" fill="#2b2b2b" text-anchor="start">0.00</text>
<text x="168.90" y="363.88" font-size="6.2" fill="#2b2b2b" text-anchor="start">0.00</text>
<text x="193.90" y="363.88" font-size="6.2" fill="#2b2b2b" text-anchor="start">0.00</text>
<text x="218.90" y="363.88" font-size="6.2" fill="#2b2b2b" text-anchor="start">0.00</text>
<text x="243.90" y="363.88" font-size="6.2" fill="#2b2b2b" text-anchor="start">0.00</text>
<text x="268.90" y="363.88" font-size="6.2" fill="#2b2b2b" text-anchor="start">0.00</text>
<text x="293.90" y="363.88" font-size="6.2" fill="#2b2b2b" text-anchor="start">0.00</text>
<text x="318.90" y="363.88" font-size="6.2" fill="#2b2b2b" text-anchor="start">0.00</text>
<text x="343.90" y="363.88" font-size="6.2" fill="#2b2b2b" text-anchor="start">0.00</text>
<text x="368.90" y="363.88" font-size="6.2" fill="#2b2b2b" text-anchor="start">0.00</text>
<text x="393.90" y="363.88" font-size="6.2" fill="#2b2b2b" text-anchor="start">0.00</text>
<text x="418.90" y="363.88" font-size="6.2" fill="#2b2b2b" text-anchor="start">0.00</text>
<text x="443.90" y="363.88" font-size="6.2" fill="#2b2b2b" text-anchor="start">0.00</text>
<text x="9.00" y="376.35" font-size="6.2" fill="#2b2b2b" text-anchor="start">-1</text>
<text x="39.10" y="376.35" font-size="6.2" fill="#2b2b2b" text-anchor="start">-0.10</text>
<text x="68.90" y="376.35" font-size="6.2" fill="#2b2b2b" text-anchor="start">0.00</text>
<text x="93.90" y="376.35" font-size="6.2" fill="#2b2b2b" text-anchor="start">0.00</text>
<text x="118.90" y="376.35" font-size="6.2" fill="#2b2b2b" text-anchor="start">0.00</text>
<text x="143.90" y="376.35" font-size="6.2" fill="#2b2b2b" text-anchor="start">0.00</text>
<text x="168.90" y="376.35" font-size="6.2" fill="#2b2b2b" text-anchor="start">0.00</text>
<text x="193.90" y="376.35" font-size="6.2" fill="#2b2b2b" text-anchor="start">0.00</text>
<text x="218.90" y="376.35" font-size="6.2" fill="#2b2b2b" text-anchor="start">0.00</text>
<text x="243.90" y="376.35" font-size="6.2" fill="#2b2b2b" text-anchor="start">0.00</text>
<text x="268.90" y="376.35" font-size="6.2" fill="#2b2b2b" text-anchor="start">0.00</text>
<text x="293.90" y="376.35" font-size="6.2" fill="#2b2b2b" text-anchor="start">0.00</text>
<text x="318.90" y="376.35" font-size="6.2" fill="#2b2b2b" text-anchor="start">0.00</text>
<text x="343.90" y="376.35" font-size="6.2" fill="#2b2b2b" text-anchor="start">0.00</text>
<text x="368.90" y="376.35" font-size="6.2" fill="#2b2b2b" text-anchor="start">0.00</text>
<text x="393.90" y="376.35" font-size="6.2" fill="#2b2b2b" text-anchor="start">0.00</text>
<text x="418.90" y="376.35" font-size="6.2" fill="#2b2b2b" text-anchor="start">0.00</text>
<text x="443.90" y="376.35" font-size="6.2" fill="#2b2b2b" text-anchor="start">0.00</text>
<text x="9.00" y="388.82" font-size="6.2" fill="#2b2b2b" text-anchor="start">-1</text>
<text x="39.10" y="388.82" font-size="6.2" fill="#2b2b2b" text-anchor="start">-0.10</text>
<text x="68.90" y="388.82" font-size="6.2" fill="#2b2b2b" text-anchor="start">0.00</text>
<text x="93.90" y="388.82" font-size="6.2" fill="#2b2b2b" text-anchor="start">0.00</text>
<text x="118.90" y="388.82" font-size="6.2" fill="#2b2b2b" text-anchor="start">0.00</text>
<text x="143.90" y="388.82" font-size="6.2" fill="#2b2b2b" text-anchor="start">0.00</text>
<text x="168.90" y="388.82" font-size="6.2" fill="#2b2b2b" text-anchor="start">0.00</text>
<text x="193.90" y="388.82" font-size="6.2" fill="#2b2b2b" text-anchor="start">0.00</text>
<text x="218.90" y="388.82" font-size="6.2" fill="#2b2b2b" text-anchor="start">0.00</text>
<text x="243.90" y="388.82" font-size="6.2" fill="#2b2b2b" text-anchor="start">0.00</text>
<text x="268.90" y="388.82" font-size="6.2" fill="#2b2b2b" text-anchor="start">0.00</text>
<text x="293.90" y="388.82" font-size="6.2" fill="#2b2b2b" text-anchor="start">0.00</text>
<text x="318.90" y="388.82" font-size="6.2" fill="#2b2b2b" text-anchor="start">0.00</text>
<text x="343.90" y="388.82" font-size="6.2" fill="#2b2b2b" text-anchor="start">0.00</text>
<text x="368.90" y="388.82" font-size="6.2" fill="#2b2b2b" text-anchor="start">0.00</text>
<text x="393.90" y="388.82" font-size="6.2" fill="#2b2b2b" text-anchor="start">0.00</text>
<text x="418.90" y="388.82" font-size="6.2" fill="#2b2b2b" text-anchor="start">0.00</text>
<text x="443.90" y="388.82" font-size="6.2" fill="#2b2b2b" text-anchor="start">0.00</text>
<text x="9.00" y="401.29" font-size="6.2" fill="#2b2b2b" text-anchor="start">-1</text>
<text x="39.10" y="401.29" font-size="6.2" fill="#2b2b2b" text-anchor="start">-0.10</text>
<text x="68.90" y="401.29" font-size="6.2" fill="#2b2b2b" text-anchor="start">0.00</text>
<text x="93.90" y="401.29" font-size="6.2" fill="#2b2b2b" text-anchor="start">0.00</text>
<text x="118.90" y="401.29" font-size="6.2" fill="#2b2b2b" text-anchor="start">0.00</text>
<text x="143.90" y="401.29" font-size="6.2" fill="#2b2b2b" text-anchor="start">0.00</text>
<text x="168.90" y="401.29" font-size="6.2" fill="#2b2b2b" text-anchor="start">0.00</text>
<text x="193.90" y="401.29" font-size="6.2" fill="#2b2b2b" text-anchor="start">0.00</text>
<text x="218.90" y="401.29" font-size="6.2" fill="#2b2b2b" text-anchor="start">0.00</text>
<text x="243.90" y="401.29" font-size="6.2" fill="#2b2b2b" text-anchor="start">0.00</text>
<text x="268.90" y="401.29" font-size="6.2" fill="#2b2b2b" text-anchor="start">0.00</text>
<text x="293.90" y="401.29" font-size="6.2" fill="#2b2b2b" text-anchor="start">0.00</text>
<text x="318.90" y="401.29" font-size="6.2" fill="#2b2b2b" text-anchor="start">0.00</text>
<text x="343.90" y="401.29" font-size="6.2" fill="#2b2b2b" text-anchor="start">0.00</text>
<text x="368.90" y="401.29" font-size="6.2" fill="#2b2b2b" text-anchor="start">0.00</text>
<text x="393.90" y="401.29" font-size="6.2" fill="#2b2b2b" text-anchor="start">0.00</text>
<text x="418.90" y="401.29" font-size="6.2" fill="#2b2b2b" text-anchor="start">0.00</text>
<text x="443.90" y="401.29" font-size="6.2" fill="#2b2b2b" text-anchor="start">0.00</text>
<text x="9.00" y="413.76" font-size="6.2" fill="#2b2b2b" text-anchor="start">-1</text>
<text x="39.10" y="413.76" font-size="6.2" fill="#2b2b2b" text-anchor="start">-0.10</text>
<text x="68.90" y="413.76" font-size="6.2" fill="#2b2b2b" text-anchor="start">0.00</text>
<text x="93.90" y="413.76" font-size="6.2" fill="#2b2b2b" text-anchor="start">0.00</text>
<text x="118.90" y="413.76" font-size="6.2" fill="#2b2b2b" text-anchor="start">0.00</text>
<text x="143.90" y="413.76" font-size="6.2" fill="#2b2b2b" text-anchor="start">0.00</text>
<text x="168.90" y="413.76" font-size="6.2" fill="#2b2b2b" text-anchor="start">0.00</text>
<text x="193.90" y="413.76" font-size="6.2" fill="#2b2b2b" text-anchor="start">0.00</text>
<text x="218.90" y="413.76" font-size="6.2" fill="#2b2b2b" text-anchor="start">0.00</text>
<text x="243.90" y="413.76" font-size="6.2" fill="#2b2b2b" text-anchor="start">0.00</text>
<text x="268.90" y="413.76" font-size="6.2" fill="#2b2b2b" text-anchor="start">0.00</text>
<text x="293.90" y="413.76" font-size="6.2" fill="#2b2b2b" text-anchor="start">0.00</text>
<text x="318.90" y="413.76" font-size="6.2" fill="#2b2b2b" text-anchor="start">0.00</text>
<text x="343.90" y="413.76" font-size="6.2" fill="#2b2b2b" text-anchor="start">0.00</text>
<text x="368.90" y="413.76" font-size="6.2" fill="#2b2b2b" text-anchor="start">0.00</text>
<text x="393.90" y="413.76" font-size="6.2" fill="#2b2b2b" text-anchor="start">0.00</text>
<text x="418.90" y="413.76" font-size="6.2" fill="#2b2b2b" text-anchor="start">0.00</text>
<text x="443.90" y="413.76" font-size="6.2" fill="#2b2b2b" text-anchor="start">0.00</text>
<rect x="6.30" y="291.30" width="487.10" height="128.40" fill="none" stroke="#a59f96" stroke-width="0.7"/>
<rect x="495.40" y="291.40" width="7.20" height="128.10" fill="#cac1b7" stroke="#a19b92" stroke-width="0.6" rx="0.8"/>
<rect x="495.40" y="291.40" width="7.20" height="6.60" fill="#f1eeea" stroke="#a19b92" stroke-width="0.6" rx="0.8"/>
<path d="M497.6 295.4 L499 293.9 L500.4 295.4" stroke="#b9b4ac" stroke-width="0.7" fill="none"/>
<rect x="495.40" y="298.40" width="7.20" height="85.00" fill="url(#thumb)" stroke="#a19b92" stroke-width="0.6" rx="0.8"/>
<rect x="495.90" y="298.70" width="6.20" height="2.40" fill="#fdfdfc"/>
<line x1="497.60" y1="339.30" x2="500.40" y2="339.30" stroke="#fbfaf9" stroke-width="0.9"/>
<line x1="497.60" y1="341.50" x2="500.40" y2="341.50" stroke="#fbfaf9" stroke-width="0.9"/>
<line x1="497.60" y1="343.70" x2="500.40" y2="343.70" stroke="#fbfaf9" stroke-width="0.9"/>
<rect x="495.40" y="412.90" width="7.20" height="6.60" fill="#f6f4f2" stroke="#a19b92" stroke-width="0.6" rx="0.8"/>
<path d="M497.3 415.0 L500.7 415.0 L499 416.9 Z" fill="#000"/>
<rect x="512.40" y="296.45" width="90.20" height="14.90" fill="url(#btn)" stroke="#7f7971" stroke-width="0.55" rx="1.4"/>
<text x="557.50" y="305.75" font-size="6.3" fill="#2b2b2b" text-anchor="middle" letter-spacing="-0.2">RunAll</text>
<rect x="512.40" y="316.50" width="90.20" height="14.90" fill="url(#btn)" stroke="#7f7971" stroke-width="0.55" rx="1.4"/>
<text x="557.50" y="325.80" font-size="6.3" fill="#2b2b2b" text-anchor="middle">Go!</text>
<rect x="512.40" y="336.55" width="90.20" height="14.90" fill="url(#btn)" stroke="#7f7971" stroke-width="0.55" rx="1.4"/>
<text x="557.50" y="345.85" font-size="6.3" fill="#2b2b2b" text-anchor="middle">Run Sequence</text>
<rect x="512.40" y="356.60" width="90.20" height="14.90" fill="url(#btn)" stroke="#7f7971" stroke-width="0.55" rx="1.4"/>
<text x="557.50" y="365.90" font-size="6.4" fill="#2b2b2b" text-anchor="middle">Run Sequence (time)</text>
<rect x="512.40" y="376.65" width="90.20" height="14.90" fill="url(#btn)" stroke="#7f7971" stroke-width="0.55" rx="1.4"/>
<text x="557.50" y="385.95" font-size="6.4" fill="#2b2b2b" text-anchor="middle">Save Sequence</text>
<rect x="512.40" y="396.60" width="90.20" height="17.00" fill="url(#btn)" stroke="#7f7971" stroke-width="0.55" rx="1.4"/>
<text x="517.00" y="407.30" font-size="6.2" fill="#2b2b2b" text-anchor="start">[None]</text>
<line x1="589.40" y1="399.60" x2="589.40" y2="410.40" stroke="#bcb6ae" stroke-width="0.6"/>
<line x1="589.90" y1="399.60" x2="589.90" y2="410.40" stroke="#ffffff" stroke-width="0.5"/>
<rect x="592.20" y="403.10" width="7.40" height="5.00" fill="#d6ccc1" stroke="#8d6c4b" stroke-width="0.45" rx="0.4"/>
<rect x="594.00" y="401.30" width="3.90" height="4.60" fill="#f5f4f2" stroke="#c2beb8" stroke-width="0.35"/>
<rect x="592.00" y="405.10" width="7.80" height="3.20" fill="url(#fold)" stroke="#c9702f" stroke-width="0.35" rx="0.4"/>
<rect x="617.55" y="296.55" width="91.10" height="35.15" fill="url(#btn)" stroke="#7f7971" stroke-width="0.55" rx="1.4"/>
<text x="663.10" y="316.70" font-size="6.45" fill="#2b2b2b" text-anchor="middle">Cycle Sequence</text>
<rect x="617.55" y="337.10" width="91.10" height="35.20" fill="url(#btn)" stroke="#7f7971" stroke-width="0.55" rx="1.4"/>
<text x="663.10" y="357.20" font-size="6.45" fill="#2b2b2b" text-anchor="middle">Cycle Sequence (time)</text>
<rect x="617.55" y="377.50" width="91.10" height="35.60" fill="url(#btn)" stroke="#7f7971" stroke-width="0.55" rx="1.4"/>
<text x="663.10" y="397.70" font-size="6.45" fill="#2b2b2b" text-anchor="middle">Stop Sequence</text>
<rect x="0.00" y="13.30" width="0.70" height="412.00" fill="#b1ada7"/>
<rect x="0.00" y="422.20" width="719.80" height="1.40" fill="#f4f2ef"/>
<rect x="0.00" y="424.20" width="721.00" height="1.80" fill="url(#bot)"/>
</svg></body></html>
